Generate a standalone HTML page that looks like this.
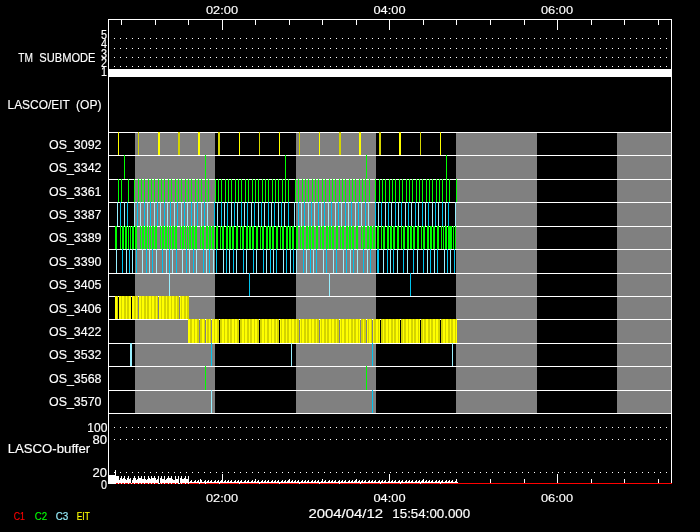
<!DOCTYPE html>
<html><head><meta charset="utf-8"><title>LASCO/EIT plan</title>
<style>
html,body{margin:0;padding:0;background:#000;}
svg{display:block;}
text{font-family:"Liberation Sans",sans-serif;stroke-width:0.15px;}
</style></head>
<body>
<svg width="700" height="532" viewBox="0 0 700 532">
<defs><filter id="g" x="0" y="0" width="100%" height="100%" filterUnits="userSpaceOnUse" color-interpolation-filters="sRGB"><feOffset dx="0" dy="0"/></filter></defs>
<rect width="700" height="532" fill="#000"/>
<g shape-rendering="crispEdges">
<rect x="135" y="132" width="80" height="281" fill="#808080"/>
<rect x="296" y="132" width="80" height="281" fill="#808080"/>
<rect x="456" y="132" width="81" height="281" fill="#808080"/>
<rect x="617" y="132" width="54" height="281" fill="#808080"/>
<rect x="108" y="132" width="564" height="1" fill="#fff"/>
<rect x="108" y="155" width="564" height="1" fill="#fff"/>
<rect x="108" y="179" width="564" height="1" fill="#fff"/>
<rect x="108" y="202" width="564" height="1" fill="#fff"/>
<rect x="108" y="226" width="564" height="1" fill="#fff"/>
<rect x="108" y="249" width="564" height="1" fill="#fff"/>
<rect x="108" y="273" width="564" height="1" fill="#fff"/>
<rect x="108" y="296" width="564" height="1" fill="#fff"/>
<rect x="108" y="319" width="564" height="1" fill="#fff"/>
<rect x="108" y="343" width="564" height="1" fill="#fff"/>
<rect x="108" y="366" width="564" height="1" fill="#fff"/>
<rect x="108" y="390" width="564" height="1" fill="#fff"/>
<rect x="108" y="413" width="564" height="1" fill="#fff"/>
<rect x="118" y="132" width="1" height="23" fill="#ffff00"/>
<rect x="138" y="132" width="1" height="23" fill="#d4d400"/>
<rect x="158" y="132" width="2" height="23" fill="#ffff00"/>
<rect x="178" y="132" width="2" height="23" fill="#d4d400"/>
<rect x="198" y="132" width="2" height="23" fill="#ffff00"/>
<rect x="218" y="132" width="2" height="23" fill="#d4d400"/>
<rect x="239" y="132" width="1" height="23" fill="#ffff00"/>
<rect x="259" y="132" width="1" height="23" fill="#d4d400"/>
<rect x="279" y="132" width="1" height="23" fill="#ffff00"/>
<rect x="299" y="132" width="1" height="23" fill="#d4d400"/>
<rect x="319" y="132" width="1" height="23" fill="#ffff00"/>
<rect x="339" y="132" width="2" height="23" fill="#d4d400"/>
<rect x="359" y="132" width="2" height="23" fill="#ffff00"/>
<rect x="379" y="132" width="2" height="23" fill="#d4d400"/>
<rect x="399" y="132" width="2" height="23" fill="#ffff00"/>
<rect x="420" y="132" width="1" height="23" fill="#d4d400"/>
<rect x="440" y="132" width="1" height="23" fill="#ffff00"/>
<rect x="124" y="155" width="1" height="24" fill="#00ff00"/>
<rect x="205" y="155" width="1" height="24" fill="#00ff00"/>
<rect x="285" y="155" width="1" height="24" fill="#00ff00"/>
<rect x="366" y="155" width="1" height="24" fill="#00ff00"/>
<rect x="446" y="155" width="1" height="24" fill="#00ff00"/>
<rect x="118" y="179" width="1" height="23" fill="#00ff00"/>
<rect x="121" y="179" width="1" height="23" fill="#00ff00"/>
<rect x="128" y="179" width="1" height="23" fill="#00ff00"/>
<rect x="134" y="179" width="1" height="23" fill="#00ff00"/>
<rect x="138" y="179" width="1" height="23" fill="#00ff00"/>
<rect x="141" y="179" width="1" height="23" fill="#00ff00"/>
<rect x="144" y="179" width="1" height="23" fill="#00ff00"/>
<rect x="148" y="179" width="1" height="23" fill="#00ff00"/>
<rect x="151" y="179" width="1" height="23" fill="#00ff00"/>
<rect x="154" y="179" width="1" height="23" fill="#00ff00"/>
<rect x="158" y="179" width="1" height="23" fill="#00ff00"/>
<rect x="161" y="179" width="1" height="23" fill="#00ff00"/>
<rect x="164" y="179" width="1" height="23" fill="#00ff00"/>
<rect x="168" y="179" width="1" height="23" fill="#00ff00"/>
<rect x="171" y="179" width="1" height="23" fill="#00ff00"/>
<rect x="175" y="179" width="1" height="23" fill="#00ff00"/>
<rect x="178" y="179" width="1" height="23" fill="#00ff00"/>
<rect x="181" y="179" width="1" height="23" fill="#00ff00"/>
<rect x="185" y="179" width="1" height="23" fill="#00ff00"/>
<rect x="188" y="179" width="1" height="23" fill="#00ff00"/>
<rect x="191" y="179" width="1" height="23" fill="#00ff00"/>
<rect x="195" y="179" width="1" height="23" fill="#00ff00"/>
<rect x="198" y="179" width="1" height="23" fill="#00ff00"/>
<rect x="201" y="179" width="1" height="23" fill="#00ff00"/>
<rect x="205" y="179" width="1" height="23" fill="#00ff00"/>
<rect x="208" y="179" width="1" height="23" fill="#00ff00"/>
<rect x="215" y="179" width="1" height="23" fill="#00ff00"/>
<rect x="218" y="179" width="1" height="23" fill="#00ff00"/>
<rect x="221" y="179" width="1" height="23" fill="#00ff00"/>
<rect x="225" y="179" width="1" height="23" fill="#00ff00"/>
<rect x="228" y="179" width="1" height="23" fill="#00ff00"/>
<rect x="231" y="179" width="1" height="23" fill="#00ff00"/>
<rect x="235" y="179" width="1" height="23" fill="#00ff00"/>
<rect x="238" y="179" width="1" height="23" fill="#00ff00"/>
<rect x="241" y="179" width="1" height="23" fill="#00ff00"/>
<rect x="245" y="179" width="1" height="23" fill="#00ff00"/>
<rect x="248" y="179" width="1" height="23" fill="#00ff00"/>
<rect x="252" y="179" width="1" height="23" fill="#00ff00"/>
<rect x="255" y="179" width="1" height="23" fill="#00ff00"/>
<rect x="258" y="179" width="1" height="23" fill="#00ff00"/>
<rect x="262" y="179" width="1" height="23" fill="#00ff00"/>
<rect x="265" y="179" width="1" height="23" fill="#00ff00"/>
<rect x="268" y="179" width="1" height="23" fill="#00ff00"/>
<rect x="272" y="179" width="1" height="23" fill="#00ff00"/>
<rect x="275" y="179" width="1" height="23" fill="#00ff00"/>
<rect x="278" y="179" width="1" height="23" fill="#00ff00"/>
<rect x="282" y="179" width="1" height="23" fill="#00ff00"/>
<rect x="285" y="179" width="1" height="23" fill="#00ff00"/>
<rect x="288" y="179" width="1" height="23" fill="#00ff00"/>
<rect x="295" y="179" width="1" height="23" fill="#00ff00"/>
<rect x="298" y="179" width="1" height="23" fill="#00ff00"/>
<rect x="302" y="179" width="1" height="23" fill="#00ff00"/>
<rect x="305" y="179" width="1" height="23" fill="#00ff00"/>
<rect x="308" y="179" width="1" height="23" fill="#00ff00"/>
<rect x="312" y="179" width="1" height="23" fill="#00ff00"/>
<rect x="315" y="179" width="1" height="23" fill="#00ff00"/>
<rect x="318" y="179" width="1" height="23" fill="#00ff00"/>
<rect x="322" y="179" width="1" height="23" fill="#00ff00"/>
<rect x="325" y="179" width="1" height="23" fill="#00ff00"/>
<rect x="329" y="179" width="1" height="23" fill="#00ff00"/>
<rect x="332" y="179" width="1" height="23" fill="#00ff00"/>
<rect x="335" y="179" width="1" height="23" fill="#00ff00"/>
<rect x="339" y="179" width="1" height="23" fill="#00ff00"/>
<rect x="342" y="179" width="1" height="23" fill="#00ff00"/>
<rect x="345" y="179" width="1" height="23" fill="#00ff00"/>
<rect x="349" y="179" width="1" height="23" fill="#00ff00"/>
<rect x="352" y="179" width="1" height="23" fill="#00ff00"/>
<rect x="355" y="179" width="1" height="23" fill="#00ff00"/>
<rect x="359" y="179" width="1" height="23" fill="#00ff00"/>
<rect x="362" y="179" width="1" height="23" fill="#00ff00"/>
<rect x="365" y="179" width="1" height="23" fill="#00ff00"/>
<rect x="369" y="179" width="1" height="23" fill="#00ff00"/>
<rect x="375" y="179" width="1" height="23" fill="#00ff00"/>
<rect x="379" y="179" width="1" height="23" fill="#00ff00"/>
<rect x="382" y="179" width="1" height="23" fill="#00ff00"/>
<rect x="385" y="179" width="1" height="23" fill="#00ff00"/>
<rect x="389" y="179" width="1" height="23" fill="#00ff00"/>
<rect x="392" y="179" width="1" height="23" fill="#00ff00"/>
<rect x="395" y="179" width="1" height="23" fill="#00ff00"/>
<rect x="399" y="179" width="1" height="23" fill="#00ff00"/>
<rect x="402" y="179" width="1" height="23" fill="#00ff00"/>
<rect x="406" y="179" width="1" height="23" fill="#00ff00"/>
<rect x="409" y="179" width="1" height="23" fill="#00ff00"/>
<rect x="412" y="179" width="1" height="23" fill="#00ff00"/>
<rect x="416" y="179" width="1" height="23" fill="#00ff00"/>
<rect x="419" y="179" width="1" height="23" fill="#00ff00"/>
<rect x="422" y="179" width="1" height="23" fill="#00ff00"/>
<rect x="426" y="179" width="1" height="23" fill="#00ff00"/>
<rect x="429" y="179" width="1" height="23" fill="#00ff00"/>
<rect x="432" y="179" width="1" height="23" fill="#00ff00"/>
<rect x="436" y="179" width="1" height="23" fill="#00ff00"/>
<rect x="439" y="179" width="1" height="23" fill="#00ff00"/>
<rect x="442" y="179" width="1" height="23" fill="#00ff00"/>
<rect x="446" y="179" width="1" height="23" fill="#00ff00"/>
<rect x="449" y="179" width="1" height="23" fill="#00ff00"/>
<rect x="456" y="179" width="1" height="23" fill="#00ff00"/>
<rect x="117" y="202" width="1" height="24" fill="#98f0ff"/>
<rect x="120" y="202" width="1" height="24" fill="#00c4ee"/>
<rect x="124" y="202" width="1" height="24" fill="#98f0ff"/>
<rect x="127" y="202" width="1" height="24" fill="#00c4ee"/>
<rect x="134" y="202" width="1" height="24" fill="#98f0ff"/>
<rect x="137" y="202" width="1" height="24" fill="#00c4ee"/>
<rect x="140" y="202" width="1" height="24" fill="#98f0ff"/>
<rect x="144" y="202" width="1" height="24" fill="#00c4ee"/>
<rect x="147" y="202" width="1" height="24" fill="#98f0ff"/>
<rect x="150" y="202" width="1" height="24" fill="#00c4ee"/>
<rect x="154" y="202" width="1" height="24" fill="#98f0ff"/>
<rect x="157" y="202" width="1" height="24" fill="#00c4ee"/>
<rect x="160" y="202" width="1" height="24" fill="#98f0ff"/>
<rect x="164" y="202" width="1" height="24" fill="#00c4ee"/>
<rect x="167" y="202" width="1" height="24" fill="#98f0ff"/>
<rect x="170" y="202" width="1" height="24" fill="#00c4ee"/>
<rect x="174" y="202" width="1" height="24" fill="#98f0ff"/>
<rect x="177" y="202" width="1" height="24" fill="#00c4ee"/>
<rect x="181" y="202" width="1" height="24" fill="#98f0ff"/>
<rect x="184" y="202" width="1" height="24" fill="#00c4ee"/>
<rect x="187" y="202" width="1" height="24" fill="#98f0ff"/>
<rect x="191" y="202" width="1" height="24" fill="#00c4ee"/>
<rect x="194" y="202" width="1" height="24" fill="#98f0ff"/>
<rect x="197" y="202" width="1" height="24" fill="#00c4ee"/>
<rect x="201" y="202" width="1" height="24" fill="#98f0ff"/>
<rect x="204" y="202" width="1" height="24" fill="#00c4ee"/>
<rect x="207" y="202" width="1" height="24" fill="#98f0ff"/>
<rect x="214" y="202" width="1" height="24" fill="#00c4ee"/>
<rect x="217" y="202" width="1" height="24" fill="#98f0ff"/>
<rect x="221" y="202" width="1" height="24" fill="#00c4ee"/>
<rect x="224" y="202" width="1" height="24" fill="#98f0ff"/>
<rect x="227" y="202" width="1" height="24" fill="#00c4ee"/>
<rect x="231" y="202" width="1" height="24" fill="#98f0ff"/>
<rect x="234" y="202" width="1" height="24" fill="#00c4ee"/>
<rect x="237" y="202" width="1" height="24" fill="#98f0ff"/>
<rect x="241" y="202" width="1" height="24" fill="#00c4ee"/>
<rect x="244" y="202" width="1" height="24" fill="#98f0ff"/>
<rect x="247" y="202" width="1" height="24" fill="#00c4ee"/>
<rect x="251" y="202" width="1" height="24" fill="#98f0ff"/>
<rect x="254" y="202" width="1" height="24" fill="#00c4ee"/>
<rect x="258" y="202" width="1" height="24" fill="#98f0ff"/>
<rect x="261" y="202" width="1" height="24" fill="#00c4ee"/>
<rect x="264" y="202" width="1" height="24" fill="#98f0ff"/>
<rect x="268" y="202" width="1" height="24" fill="#00c4ee"/>
<rect x="271" y="202" width="1" height="24" fill="#98f0ff"/>
<rect x="274" y="202" width="1" height="24" fill="#00c4ee"/>
<rect x="278" y="202" width="1" height="24" fill="#98f0ff"/>
<rect x="281" y="202" width="1" height="24" fill="#00c4ee"/>
<rect x="284" y="202" width="1" height="24" fill="#98f0ff"/>
<rect x="288" y="202" width="1" height="24" fill="#00c4ee"/>
<rect x="294" y="202" width="1" height="24" fill="#98f0ff"/>
<rect x="298" y="202" width="1" height="24" fill="#00c4ee"/>
<rect x="301" y="202" width="1" height="24" fill="#98f0ff"/>
<rect x="304" y="202" width="1" height="24" fill="#00c4ee"/>
<rect x="308" y="202" width="1" height="24" fill="#98f0ff"/>
<rect x="311" y="202" width="1" height="24" fill="#00c4ee"/>
<rect x="314" y="202" width="1" height="24" fill="#98f0ff"/>
<rect x="318" y="202" width="1" height="24" fill="#00c4ee"/>
<rect x="321" y="202" width="1" height="24" fill="#98f0ff"/>
<rect x="324" y="202" width="1" height="24" fill="#00c4ee"/>
<rect x="328" y="202" width="1" height="24" fill="#98f0ff"/>
<rect x="331" y="202" width="1" height="24" fill="#00c4ee"/>
<rect x="335" y="202" width="1" height="24" fill="#98f0ff"/>
<rect x="338" y="202" width="1" height="24" fill="#00c4ee"/>
<rect x="341" y="202" width="1" height="24" fill="#98f0ff"/>
<rect x="345" y="202" width="1" height="24" fill="#00c4ee"/>
<rect x="348" y="202" width="1" height="24" fill="#98f0ff"/>
<rect x="351" y="202" width="1" height="24" fill="#00c4ee"/>
<rect x="355" y="202" width="1" height="24" fill="#98f0ff"/>
<rect x="358" y="202" width="1" height="24" fill="#00c4ee"/>
<rect x="361" y="202" width="1" height="24" fill="#98f0ff"/>
<rect x="365" y="202" width="1" height="24" fill="#00c4ee"/>
<rect x="368" y="202" width="1" height="24" fill="#98f0ff"/>
<rect x="375" y="202" width="1" height="24" fill="#00c4ee"/>
<rect x="378" y="202" width="1" height="24" fill="#98f0ff"/>
<rect x="381" y="202" width="1" height="24" fill="#00c4ee"/>
<rect x="385" y="202" width="1" height="24" fill="#98f0ff"/>
<rect x="388" y="202" width="1" height="24" fill="#00c4ee"/>
<rect x="391" y="202" width="1" height="24" fill="#98f0ff"/>
<rect x="395" y="202" width="1" height="24" fill="#00c4ee"/>
<rect x="398" y="202" width="1" height="24" fill="#98f0ff"/>
<rect x="401" y="202" width="1" height="24" fill="#00c4ee"/>
<rect x="405" y="202" width="1" height="24" fill="#98f0ff"/>
<rect x="408" y="202" width="1" height="24" fill="#00c4ee"/>
<rect x="411" y="202" width="1" height="24" fill="#98f0ff"/>
<rect x="415" y="202" width="1" height="24" fill="#00c4ee"/>
<rect x="418" y="202" width="1" height="24" fill="#98f0ff"/>
<rect x="422" y="202" width="1" height="24" fill="#00c4ee"/>
<rect x="425" y="202" width="1" height="24" fill="#98f0ff"/>
<rect x="428" y="202" width="1" height="24" fill="#00c4ee"/>
<rect x="432" y="202" width="1" height="24" fill="#98f0ff"/>
<rect x="435" y="202" width="1" height="24" fill="#00c4ee"/>
<rect x="438" y="202" width="1" height="24" fill="#98f0ff"/>
<rect x="442" y="202" width="1" height="24" fill="#00c4ee"/>
<rect x="445" y="202" width="1" height="24" fill="#98f0ff"/>
<rect x="448" y="202" width="1" height="24" fill="#00c4ee"/>
<rect x="455" y="202" width="1" height="24" fill="#98f0ff"/>
<rect x="115" y="226" width="2" height="23" fill="#00ff00"/>
<rect x="120" y="226" width="1" height="23" fill="#00ff00"/>
<rect x="122" y="226" width="2" height="23" fill="#00ff00"/>
<rect x="125" y="226" width="2" height="23" fill="#00ff00"/>
<rect x="128" y="226" width="1" height="23" fill="#00ff00"/>
<rect x="130" y="226" width="1" height="23" fill="#00ff00"/>
<rect x="132" y="226" width="2" height="23" fill="#00ff00"/>
<rect x="135" y="226" width="2" height="23" fill="#00ff00"/>
<rect x="140" y="226" width="1" height="23" fill="#00ff00"/>
<rect x="142" y="226" width="2" height="23" fill="#00ff00"/>
<rect x="145" y="226" width="2" height="23" fill="#00ff00"/>
<rect x="148" y="226" width="1" height="23" fill="#00ff00"/>
<rect x="150" y="226" width="1" height="23" fill="#00ff00"/>
<rect x="152" y="226" width="2" height="23" fill="#00ff00"/>
<rect x="155" y="226" width="2" height="23" fill="#00ff00"/>
<rect x="160" y="226" width="1" height="23" fill="#00ff00"/>
<rect x="162" y="226" width="2" height="23" fill="#00ff00"/>
<rect x="165" y="226" width="2" height="23" fill="#00ff00"/>
<rect x="168" y="226" width="1" height="23" fill="#00ff00"/>
<rect x="170" y="226" width="1" height="23" fill="#00ff00"/>
<rect x="172" y="226" width="2" height="23" fill="#00ff00"/>
<rect x="175" y="226" width="2" height="23" fill="#00ff00"/>
<rect x="180" y="226" width="1" height="23" fill="#00ff00"/>
<rect x="182" y="226" width="2" height="23" fill="#00ff00"/>
<rect x="185" y="226" width="1" height="23" fill="#00ff00"/>
<rect x="187" y="226" width="1" height="23" fill="#00ff00"/>
<rect x="189" y="226" width="2" height="23" fill="#00ff00"/>
<rect x="192" y="226" width="2" height="23" fill="#00ff00"/>
<rect x="195" y="226" width="2" height="23" fill="#00ff00"/>
<rect x="200" y="226" width="1" height="23" fill="#00ff00"/>
<rect x="202" y="226" width="2" height="23" fill="#00ff00"/>
<rect x="206" y="226" width="2" height="23" fill="#00ff00"/>
<rect x="209" y="226" width="2" height="23" fill="#00ff00"/>
<rect x="212" y="226" width="2" height="23" fill="#00ff00"/>
<rect x="216" y="226" width="2" height="23" fill="#00ff00"/>
<rect x="220" y="226" width="1" height="23" fill="#00ff00"/>
<rect x="222" y="226" width="2" height="23" fill="#00ff00"/>
<rect x="226" y="226" width="2" height="23" fill="#00ff00"/>
<rect x="229" y="226" width="2" height="23" fill="#00ff00"/>
<rect x="232" y="226" width="2" height="23" fill="#00ff00"/>
<rect x="236" y="226" width="2" height="23" fill="#00ff00"/>
<rect x="240" y="226" width="1" height="23" fill="#00ff00"/>
<rect x="242" y="226" width="2" height="23" fill="#00ff00"/>
<rect x="246" y="226" width="2" height="23" fill="#00ff00"/>
<rect x="249" y="226" width="2" height="23" fill="#00ff00"/>
<rect x="252" y="226" width="2" height="23" fill="#00ff00"/>
<rect x="256" y="226" width="2" height="23" fill="#00ff00"/>
<rect x="260" y="226" width="1" height="23" fill="#00ff00"/>
<rect x="262" y="226" width="2" height="23" fill="#00ff00"/>
<rect x="266" y="226" width="2" height="23" fill="#00ff00"/>
<rect x="269" y="226" width="2" height="23" fill="#00ff00"/>
<rect x="272" y="226" width="2" height="23" fill="#00ff00"/>
<rect x="276" y="226" width="2" height="23" fill="#00ff00"/>
<rect x="280" y="226" width="1" height="23" fill="#00ff00"/>
<rect x="282" y="226" width="2" height="23" fill="#00ff00"/>
<rect x="286" y="226" width="2" height="23" fill="#00ff00"/>
<rect x="289" y="226" width="2" height="23" fill="#00ff00"/>
<rect x="292" y="226" width="2" height="23" fill="#00ff00"/>
<rect x="296" y="226" width="2" height="23" fill="#00ff00"/>
<rect x="300" y="226" width="1" height="23" fill="#00ff00"/>
<rect x="302" y="226" width="2" height="23" fill="#00ff00"/>
<rect x="306" y="226" width="2" height="23" fill="#00ff00"/>
<rect x="309" y="226" width="2" height="23" fill="#00ff00"/>
<rect x="312" y="226" width="2" height="23" fill="#00ff00"/>
<rect x="316" y="226" width="2" height="23" fill="#00ff00"/>
<rect x="320" y="226" width="1" height="23" fill="#00ff00"/>
<rect x="322" y="226" width="2" height="23" fill="#00ff00"/>
<rect x="326" y="226" width="2" height="23" fill="#00ff00"/>
<rect x="329" y="226" width="2" height="23" fill="#00ff00"/>
<rect x="332" y="226" width="2" height="23" fill="#00ff00"/>
<rect x="336" y="226" width="2" height="23" fill="#00ff00"/>
<rect x="340" y="226" width="1" height="23" fill="#00ff00"/>
<rect x="342" y="226" width="2" height="23" fill="#00ff00"/>
<rect x="346" y="226" width="2" height="23" fill="#00ff00"/>
<rect x="349" y="226" width="2" height="23" fill="#00ff00"/>
<rect x="352" y="226" width="2" height="23" fill="#00ff00"/>
<rect x="356" y="226" width="2" height="23" fill="#00ff00"/>
<rect x="361" y="226" width="1" height="23" fill="#00ff00"/>
<rect x="363" y="226" width="2" height="23" fill="#00ff00"/>
<rect x="367" y="226" width="2" height="23" fill="#00ff00"/>
<rect x="370" y="226" width="2" height="23" fill="#00ff00"/>
<rect x="373" y="226" width="2" height="23" fill="#00ff00"/>
<rect x="377" y="226" width="2" height="23" fill="#00ff00"/>
<rect x="381" y="226" width="1" height="23" fill="#00ff00"/>
<rect x="383" y="226" width="2" height="23" fill="#00ff00"/>
<rect x="387" y="226" width="2" height="23" fill="#00ff00"/>
<rect x="390" y="226" width="2" height="23" fill="#00ff00"/>
<rect x="393" y="226" width="2" height="23" fill="#00ff00"/>
<rect x="397" y="226" width="2" height="23" fill="#00ff00"/>
<rect x="401" y="226" width="1" height="23" fill="#00ff00"/>
<rect x="403" y="226" width="2" height="23" fill="#00ff00"/>
<rect x="407" y="226" width="2" height="23" fill="#00ff00"/>
<rect x="410" y="226" width="2" height="23" fill="#00ff00"/>
<rect x="413" y="226" width="2" height="23" fill="#00ff00"/>
<rect x="417" y="226" width="2" height="23" fill="#00ff00"/>
<rect x="421" y="226" width="1" height="23" fill="#00ff00"/>
<rect x="423" y="226" width="2" height="23" fill="#00ff00"/>
<rect x="427" y="226" width="2" height="23" fill="#00ff00"/>
<rect x="430" y="226" width="2" height="23" fill="#00ff00"/>
<rect x="433" y="226" width="2" height="23" fill="#00ff00"/>
<rect x="437" y="226" width="2" height="23" fill="#00ff00"/>
<rect x="441" y="226" width="1" height="23" fill="#00ff00"/>
<rect x="443" y="226" width="1" height="23" fill="#00ff00"/>
<rect x="445" y="226" width="2" height="23" fill="#00ff00"/>
<rect x="448" y="226" width="2" height="23" fill="#00ff00"/>
<rect x="450" y="226" width="2" height="23" fill="#00ff00"/>
<rect x="453" y="226" width="1" height="23" fill="#00ff00"/>
<rect x="455" y="226" width="1" height="23" fill="#00ff00"/>
<rect x="116" y="249" width="1" height="24" fill="#98f0ff"/>
<rect x="122" y="249" width="1" height="24" fill="#00c4ee"/>
<rect x="126" y="249" width="1" height="24" fill="#98f0ff"/>
<rect x="129" y="249" width="1" height="24" fill="#00c4ee"/>
<rect x="132" y="249" width="1" height="24" fill="#98f0ff"/>
<rect x="136" y="249" width="1" height="24" fill="#00c4ee"/>
<rect x="142" y="249" width="1" height="24" fill="#98f0ff"/>
<rect x="146" y="249" width="1" height="24" fill="#00c4ee"/>
<rect x="149" y="249" width="1" height="24" fill="#98f0ff"/>
<rect x="152" y="249" width="1" height="24" fill="#00c4ee"/>
<rect x="156" y="249" width="1" height="24" fill="#98f0ff"/>
<rect x="162" y="249" width="1" height="24" fill="#00c4ee"/>
<rect x="166" y="249" width="1" height="24" fill="#98f0ff"/>
<rect x="169" y="249" width="1" height="24" fill="#00c4ee"/>
<rect x="172" y="249" width="1" height="24" fill="#98f0ff"/>
<rect x="176" y="249" width="1" height="24" fill="#00c4ee"/>
<rect x="182" y="249" width="1" height="24" fill="#98f0ff"/>
<rect x="186" y="249" width="1" height="24" fill="#00c4ee"/>
<rect x="189" y="249" width="1" height="24" fill="#98f0ff"/>
<rect x="193" y="249" width="1" height="24" fill="#00c4ee"/>
<rect x="196" y="249" width="1" height="24" fill="#98f0ff"/>
<rect x="203" y="249" width="1" height="24" fill="#00c4ee"/>
<rect x="206" y="249" width="1" height="24" fill="#98f0ff"/>
<rect x="209" y="249" width="1" height="24" fill="#00c4ee"/>
<rect x="213" y="249" width="1" height="24" fill="#98f0ff"/>
<rect x="216" y="249" width="1" height="24" fill="#00c4ee"/>
<rect x="223" y="249" width="1" height="24" fill="#98f0ff"/>
<rect x="226" y="249" width="1" height="24" fill="#00c4ee"/>
<rect x="229" y="249" width="1" height="24" fill="#98f0ff"/>
<rect x="233" y="249" width="1" height="24" fill="#00c4ee"/>
<rect x="236" y="249" width="1" height="24" fill="#98f0ff"/>
<rect x="243" y="249" width="1" height="24" fill="#00c4ee"/>
<rect x="246" y="249" width="1" height="24" fill="#98f0ff"/>
<rect x="253" y="249" width="1" height="24" fill="#00c4ee"/>
<rect x="256" y="249" width="1" height="24" fill="#98f0ff"/>
<rect x="263" y="249" width="1" height="24" fill="#00c4ee"/>
<rect x="266" y="249" width="1" height="24" fill="#98f0ff"/>
<rect x="270" y="249" width="1" height="24" fill="#00c4ee"/>
<rect x="273" y="249" width="1" height="24" fill="#98f0ff"/>
<rect x="276" y="249" width="1" height="24" fill="#00c4ee"/>
<rect x="283" y="249" width="1" height="24" fill="#98f0ff"/>
<rect x="286" y="249" width="1" height="24" fill="#00c4ee"/>
<rect x="290" y="249" width="1" height="24" fill="#98f0ff"/>
<rect x="293" y="249" width="1" height="24" fill="#00c4ee"/>
<rect x="296" y="249" width="1" height="24" fill="#98f0ff"/>
<rect x="303" y="249" width="1" height="24" fill="#00c4ee"/>
<rect x="306" y="249" width="1" height="24" fill="#98f0ff"/>
<rect x="310" y="249" width="1" height="24" fill="#00c4ee"/>
<rect x="313" y="249" width="1" height="24" fill="#98f0ff"/>
<rect x="316" y="249" width="1" height="24" fill="#00c4ee"/>
<rect x="323" y="249" width="1" height="24" fill="#98f0ff"/>
<rect x="326" y="249" width="1" height="24" fill="#00c4ee"/>
<rect x="333" y="249" width="1" height="24" fill="#98f0ff"/>
<rect x="336" y="249" width="1" height="24" fill="#00c4ee"/>
<rect x="343" y="249" width="1" height="24" fill="#98f0ff"/>
<rect x="346" y="249" width="1" height="24" fill="#00c4ee"/>
<rect x="350" y="249" width="1" height="24" fill="#98f0ff"/>
<rect x="353" y="249" width="1" height="24" fill="#00c4ee"/>
<rect x="357" y="249" width="1" height="24" fill="#98f0ff"/>
<rect x="363" y="249" width="1" height="24" fill="#00c4ee"/>
<rect x="367" y="249" width="1" height="24" fill="#98f0ff"/>
<rect x="370" y="249" width="1" height="24" fill="#00c4ee"/>
<rect x="377" y="249" width="2" height="24" fill="#00c4ee"/>
<rect x="383" y="249" width="1" height="24" fill="#98f0ff"/>
<rect x="387" y="249" width="1" height="24" fill="#00c4ee"/>
<rect x="390" y="249" width="1" height="24" fill="#98f0ff"/>
<rect x="393" y="249" width="1" height="24" fill="#00c4ee"/>
<rect x="397" y="249" width="1" height="24" fill="#98f0ff"/>
<rect x="403" y="249" width="1" height="24" fill="#00c4ee"/>
<rect x="407" y="249" width="1" height="24" fill="#98f0ff"/>
<rect x="413" y="249" width="1" height="24" fill="#00c4ee"/>
<rect x="417" y="249" width="1" height="24" fill="#98f0ff"/>
<rect x="423" y="249" width="1" height="24" fill="#00c4ee"/>
<rect x="427" y="249" width="1" height="24" fill="#98f0ff"/>
<rect x="430" y="249" width="1" height="24" fill="#00c4ee"/>
<rect x="434" y="249" width="1" height="24" fill="#98f0ff"/>
<rect x="437" y="249" width="1" height="24" fill="#00c4ee"/>
<rect x="444" y="249" width="1" height="24" fill="#98f0ff"/>
<rect x="447" y="249" width="1" height="24" fill="#00c4ee"/>
<rect x="450" y="249" width="1" height="24" fill="#98f0ff"/>
<rect x="454" y="249" width="1" height="24" fill="#00c4ee"/>
<rect x="169" y="273" width="1" height="23" fill="#98f0ff"/>
<rect x="249" y="273" width="1" height="23" fill="#00c4ee"/>
<rect x="329" y="273" width="1" height="23" fill="#98f0ff"/>
<rect x="410" y="273" width="1" height="23" fill="#00c4ee"/>
<rect x="115" y="296" width="1" height="23" fill="#ffff00"/>
<rect x="116" y="296" width="1" height="23" fill="#ffff00"/>
<rect x="117" y="296" width="1" height="23" fill="#d4d400"/>
<rect x="119" y="296" width="1" height="23" fill="#ffff00"/>
<rect x="120" y="296" width="1" height="23" fill="#ffff00"/>
<rect x="121" y="296" width="1" height="23" fill="#d4d400"/>
<rect x="122" y="296" width="1" height="23" fill="#ffff00"/>
<rect x="123" y="296" width="1" height="23" fill="#ffff00"/>
<rect x="124" y="296" width="1" height="23" fill="#d4d400"/>
<rect x="125" y="296" width="1" height="23" fill="#d4d400"/>
<rect x="126" y="296" width="1" height="23" fill="#ffff00"/>
<rect x="127" y="296" width="1" height="23" fill="#d4d400"/>
<rect x="128" y="296" width="1" height="23" fill="#d4d400"/>
<rect x="129" y="296" width="1" height="23" fill="#ffff00"/>
<rect x="130" y="296" width="1" height="23" fill="#ffff00"/>
<rect x="132" y="296" width="1" height="23" fill="#ffff00"/>
<rect x="133" y="296" width="1" height="23" fill="#ffff00"/>
<rect x="134" y="296" width="1" height="23" fill="#d4d400"/>
<rect x="135" y="296" width="1" height="23" fill="#d4d400"/>
<rect x="136" y="296" width="1" height="23" fill="#ffff00"/>
<rect x="137" y="296" width="1" height="23" fill="#d4d400"/>
<rect x="139" y="296" width="1" height="23" fill="#ffff00"/>
<rect x="140" y="296" width="1" height="23" fill="#ffff00"/>
<rect x="141" y="296" width="1" height="23" fill="#d4d400"/>
<rect x="142" y="296" width="1" height="23" fill="#ffff00"/>
<rect x="143" y="296" width="1" height="23" fill="#ffff00"/>
<rect x="144" y="296" width="1" height="23" fill="#d4d400"/>
<rect x="145" y="296" width="1" height="23" fill="#d4d400"/>
<rect x="146" y="296" width="1" height="23" fill="#ffff00"/>
<rect x="147" y="296" width="1" height="23" fill="#d4d400"/>
<rect x="148" y="296" width="1" height="23" fill="#d4d400"/>
<rect x="149" y="296" width="1" height="23" fill="#ffff00"/>
<rect x="150" y="296" width="1" height="23" fill="#ffff00"/>
<rect x="151" y="296" width="1" height="23" fill="#d4d400"/>
<rect x="152" y="296" width="1" height="23" fill="#ffff00"/>
<rect x="153" y="296" width="1" height="23" fill="#ffff00"/>
<rect x="154" y="296" width="1" height="23" fill="#d4d400"/>
<rect x="155" y="296" width="1" height="23" fill="#d4d400"/>
<rect x="156" y="296" width="1" height="23" fill="#ffff00"/>
<rect x="157" y="296" width="1" height="23" fill="#d4d400"/>
<rect x="159" y="296" width="1" height="23" fill="#ffff00"/>
<rect x="160" y="296" width="1" height="23" fill="#ffff00"/>
<rect x="161" y="296" width="1" height="23" fill="#d4d400"/>
<rect x="162" y="296" width="1" height="23" fill="#ffff00"/>
<rect x="163" y="296" width="1" height="23" fill="#ffff00"/>
<rect x="164" y="296" width="1" height="23" fill="#d4d400"/>
<rect x="165" y="296" width="1" height="23" fill="#d4d400"/>
<rect x="166" y="296" width="1" height="23" fill="#ffff00"/>
<rect x="167" y="296" width="1" height="23" fill="#d4d400"/>
<rect x="168" y="296" width="1" height="23" fill="#d4d400"/>
<rect x="169" y="296" width="1" height="23" fill="#ffff00"/>
<rect x="170" y="296" width="1" height="23" fill="#ffff00"/>
<rect x="171" y="296" width="1" height="23" fill="#d4d400"/>
<rect x="172" y="296" width="1" height="23" fill="#ffff00"/>
<rect x="173" y="296" width="1" height="23" fill="#ffff00"/>
<rect x="174" y="296" width="1" height="23" fill="#d4d400"/>
<rect x="175" y="296" width="1" height="23" fill="#d4d400"/>
<rect x="176" y="296" width="1" height="23" fill="#ffff00"/>
<rect x="177" y="296" width="1" height="23" fill="#d4d400"/>
<rect x="178" y="296" width="1" height="23" fill="#d4d400"/>
<rect x="180" y="296" width="1" height="23" fill="#ffff00"/>
<rect x="181" y="296" width="1" height="23" fill="#d4d400"/>
<rect x="182" y="296" width="1" height="23" fill="#ffff00"/>
<rect x="183" y="296" width="1" height="23" fill="#ffff00"/>
<rect x="184" y="296" width="1" height="23" fill="#d4d400"/>
<rect x="185" y="296" width="1" height="23" fill="#d4d400"/>
<rect x="186" y="296" width="1" height="23" fill="#ffff00"/>
<rect x="187" y="296" width="1" height="23" fill="#d4d400"/>
<rect x="188" y="296" width="1" height="23" fill="#d4d400"/>
<rect x="188" y="319" width="1" height="24" fill="#ffff00"/>
<rect x="189" y="319" width="1" height="24" fill="#ffff00"/>
<rect x="190" y="319" width="1" height="24" fill="#d4d400"/>
<rect x="191" y="319" width="1" height="24" fill="#d4d400"/>
<rect x="192" y="319" width="1" height="24" fill="#ffff00"/>
<rect x="193" y="319" width="1" height="24" fill="#ffff00"/>
<rect x="194" y="319" width="1" height="24" fill="#d4d400"/>
<rect x="195" y="319" width="1" height="24" fill="#ffff00"/>
<rect x="196" y="319" width="1" height="24" fill="#ffff00"/>
<rect x="197" y="319" width="1" height="24" fill="#d4d400"/>
<rect x="198" y="319" width="1" height="24" fill="#d4d400"/>
<rect x="200" y="319" width="1" height="24" fill="#d4d400"/>
<rect x="201" y="319" width="1" height="24" fill="#d4d400"/>
<rect x="202" y="319" width="1" height="24" fill="#ffff00"/>
<rect x="203" y="319" width="1" height="24" fill="#ffff00"/>
<rect x="204" y="319" width="1" height="24" fill="#d4d400"/>
<rect x="206" y="319" width="1" height="24" fill="#ffff00"/>
<rect x="207" y="319" width="1" height="24" fill="#d4d400"/>
<rect x="208" y="319" width="1" height="24" fill="#d4d400"/>
<rect x="209" y="319" width="1" height="24" fill="#ffff00"/>
<rect x="210" y="319" width="1" height="24" fill="#d4d400"/>
<rect x="212" y="319" width="1" height="24" fill="#ffff00"/>
<rect x="213" y="319" width="1" height="24" fill="#ffff00"/>
<rect x="214" y="319" width="1" height="24" fill="#d4d400"/>
<rect x="215" y="319" width="1" height="24" fill="#ffff00"/>
<rect x="216" y="319" width="1" height="24" fill="#ffff00"/>
<rect x="217" y="319" width="1" height="24" fill="#d4d400"/>
<rect x="218" y="319" width="1" height="24" fill="#d4d400"/>
<rect x="220" y="319" width="1" height="24" fill="#d4d400"/>
<rect x="221" y="319" width="1" height="24" fill="#d4d400"/>
<rect x="222" y="319" width="1" height="24" fill="#ffff00"/>
<rect x="223" y="319" width="1" height="24" fill="#ffff00"/>
<rect x="224" y="319" width="1" height="24" fill="#d4d400"/>
<rect x="225" y="319" width="1" height="24" fill="#ffff00"/>
<rect x="226" y="319" width="1" height="24" fill="#ffff00"/>
<rect x="227" y="319" width="1" height="24" fill="#d4d400"/>
<rect x="228" y="319" width="1" height="24" fill="#d4d400"/>
<rect x="229" y="319" width="1" height="24" fill="#ffff00"/>
<rect x="230" y="319" width="1" height="24" fill="#d4d400"/>
<rect x="231" y="319" width="1" height="24" fill="#d4d400"/>
<rect x="232" y="319" width="1" height="24" fill="#ffff00"/>
<rect x="233" y="319" width="1" height="24" fill="#ffff00"/>
<rect x="234" y="319" width="1" height="24" fill="#d4d400"/>
<rect x="235" y="319" width="1" height="24" fill="#ffff00"/>
<rect x="236" y="319" width="1" height="24" fill="#ffff00"/>
<rect x="237" y="319" width="1" height="24" fill="#d4d400"/>
<rect x="238" y="319" width="1" height="24" fill="#d4d400"/>
<rect x="240" y="319" width="1" height="24" fill="#d4d400"/>
<rect x="241" y="319" width="1" height="24" fill="#d4d400"/>
<rect x="242" y="319" width="1" height="24" fill="#ffff00"/>
<rect x="243" y="319" width="1" height="24" fill="#ffff00"/>
<rect x="244" y="319" width="1" height="24" fill="#d4d400"/>
<rect x="245" y="319" width="1" height="24" fill="#ffff00"/>
<rect x="246" y="319" width="1" height="24" fill="#ffff00"/>
<rect x="247" y="319" width="1" height="24" fill="#d4d400"/>
<rect x="248" y="319" width="1" height="24" fill="#d4d400"/>
<rect x="249" y="319" width="1" height="24" fill="#ffff00"/>
<rect x="250" y="319" width="1" height="24" fill="#d4d400"/>
<rect x="251" y="319" width="1" height="24" fill="#d4d400"/>
<rect x="252" y="319" width="1" height="24" fill="#ffff00"/>
<rect x="253" y="319" width="1" height="24" fill="#ffff00"/>
<rect x="254" y="319" width="1" height="24" fill="#d4d400"/>
<rect x="255" y="319" width="1" height="24" fill="#ffff00"/>
<rect x="256" y="319" width="1" height="24" fill="#ffff00"/>
<rect x="257" y="319" width="1" height="24" fill="#d4d400"/>
<rect x="258" y="319" width="1" height="24" fill="#d4d400"/>
<rect x="260" y="319" width="1" height="24" fill="#d4d400"/>
<rect x="261" y="319" width="1" height="24" fill="#d4d400"/>
<rect x="262" y="319" width="1" height="24" fill="#ffff00"/>
<rect x="263" y="319" width="1" height="24" fill="#ffff00"/>
<rect x="264" y="319" width="1" height="24" fill="#d4d400"/>
<rect x="265" y="319" width="1" height="24" fill="#ffff00"/>
<rect x="266" y="319" width="1" height="24" fill="#ffff00"/>
<rect x="267" y="319" width="1" height="24" fill="#d4d400"/>
<rect x="268" y="319" width="1" height="24" fill="#d4d400"/>
<rect x="269" y="319" width="1" height="24" fill="#ffff00"/>
<rect x="270" y="319" width="1" height="24" fill="#ffff00"/>
<rect x="271" y="319" width="1" height="24" fill="#d4d400"/>
<rect x="272" y="319" width="1" height="24" fill="#ffff00"/>
<rect x="273" y="319" width="1" height="24" fill="#ffff00"/>
<rect x="274" y="319" width="1" height="24" fill="#d4d400"/>
<rect x="275" y="319" width="1" height="24" fill="#d4d400"/>
<rect x="276" y="319" width="1" height="24" fill="#ffff00"/>
<rect x="277" y="319" width="1" height="24" fill="#d4d400"/>
<rect x="278" y="319" width="1" height="24" fill="#d4d400"/>
<rect x="280" y="319" width="1" height="24" fill="#ffff00"/>
<rect x="281" y="319" width="1" height="24" fill="#d4d400"/>
<rect x="282" y="319" width="1" height="24" fill="#ffff00"/>
<rect x="283" y="319" width="1" height="24" fill="#ffff00"/>
<rect x="284" y="319" width="1" height="24" fill="#d4d400"/>
<rect x="285" y="319" width="1" height="24" fill="#d4d400"/>
<rect x="286" y="319" width="1" height="24" fill="#ffff00"/>
<rect x="287" y="319" width="1" height="24" fill="#d4d400"/>
<rect x="288" y="319" width="1" height="24" fill="#d4d400"/>
<rect x="289" y="319" width="1" height="24" fill="#ffff00"/>
<rect x="290" y="319" width="1" height="24" fill="#ffff00"/>
<rect x="291" y="319" width="1" height="24" fill="#d4d400"/>
<rect x="292" y="319" width="1" height="24" fill="#ffff00"/>
<rect x="293" y="319" width="1" height="24" fill="#ffff00"/>
<rect x="294" y="319" width="1" height="24" fill="#d4d400"/>
<rect x="295" y="319" width="1" height="24" fill="#d4d400"/>
<rect x="296" y="319" width="1" height="24" fill="#ffff00"/>
<rect x="297" y="319" width="1" height="24" fill="#d4d400"/>
<rect x="298" y="319" width="1" height="24" fill="#d4d400"/>
<rect x="300" y="319" width="1" height="24" fill="#ffff00"/>
<rect x="301" y="319" width="1" height="24" fill="#d4d400"/>
<rect x="302" y="319" width="1" height="24" fill="#ffff00"/>
<rect x="303" y="319" width="1" height="24" fill="#ffff00"/>
<rect x="304" y="319" width="1" height="24" fill="#d4d400"/>
<rect x="305" y="319" width="1" height="24" fill="#d4d400"/>
<rect x="306" y="319" width="1" height="24" fill="#ffff00"/>
<rect x="307" y="319" width="1" height="24" fill="#d4d400"/>
<rect x="308" y="319" width="1" height="24" fill="#d4d400"/>
<rect x="309" y="319" width="1" height="24" fill="#ffff00"/>
<rect x="310" y="319" width="1" height="24" fill="#ffff00"/>
<rect x="311" y="319" width="1" height="24" fill="#d4d400"/>
<rect x="312" y="319" width="1" height="24" fill="#ffff00"/>
<rect x="313" y="319" width="1" height="24" fill="#ffff00"/>
<rect x="314" y="319" width="1" height="24" fill="#d4d400"/>
<rect x="315" y="319" width="1" height="24" fill="#d4d400"/>
<rect x="316" y="319" width="1" height="24" fill="#ffff00"/>
<rect x="317" y="319" width="1" height="24" fill="#d4d400"/>
<rect x="318" y="319" width="1" height="24" fill="#d4d400"/>
<rect x="320" y="319" width="1" height="24" fill="#ffff00"/>
<rect x="321" y="319" width="1" height="24" fill="#d4d400"/>
<rect x="322" y="319" width="1" height="24" fill="#ffff00"/>
<rect x="323" y="319" width="1" height="24" fill="#ffff00"/>
<rect x="324" y="319" width="1" height="24" fill="#d4d400"/>
<rect x="325" y="319" width="1" height="24" fill="#d4d400"/>
<rect x="326" y="319" width="1" height="24" fill="#ffff00"/>
<rect x="327" y="319" width="1" height="24" fill="#d4d400"/>
<rect x="328" y="319" width="1" height="24" fill="#d4d400"/>
<rect x="329" y="319" width="1" height="24" fill="#ffff00"/>
<rect x="330" y="319" width="1" height="24" fill="#ffff00"/>
<rect x="331" y="319" width="1" height="24" fill="#d4d400"/>
<rect x="332" y="319" width="1" height="24" fill="#ffff00"/>
<rect x="333" y="319" width="1" height="24" fill="#ffff00"/>
<rect x="334" y="319" width="1" height="24" fill="#d4d400"/>
<rect x="335" y="319" width="1" height="24" fill="#d4d400"/>
<rect x="336" y="319" width="1" height="24" fill="#ffff00"/>
<rect x="337" y="319" width="1" height="24" fill="#d4d400"/>
<rect x="338" y="319" width="1" height="24" fill="#d4d400"/>
<rect x="340" y="319" width="1" height="24" fill="#ffff00"/>
<rect x="341" y="319" width="1" height="24" fill="#d4d400"/>
<rect x="342" y="319" width="1" height="24" fill="#ffff00"/>
<rect x="343" y="319" width="1" height="24" fill="#ffff00"/>
<rect x="344" y="319" width="1" height="24" fill="#d4d400"/>
<rect x="345" y="319" width="1" height="24" fill="#d4d400"/>
<rect x="346" y="319" width="1" height="24" fill="#ffff00"/>
<rect x="347" y="319" width="1" height="24" fill="#ffff00"/>
<rect x="348" y="319" width="1" height="24" fill="#d4d400"/>
<rect x="349" y="319" width="1" height="24" fill="#ffff00"/>
<rect x="350" y="319" width="1" height="24" fill="#ffff00"/>
<rect x="351" y="319" width="1" height="24" fill="#d4d400"/>
<rect x="352" y="319" width="1" height="24" fill="#d4d400"/>
<rect x="353" y="319" width="1" height="24" fill="#ffff00"/>
<rect x="354" y="319" width="1" height="24" fill="#d4d400"/>
<rect x="355" y="319" width="1" height="24" fill="#d4d400"/>
<rect x="356" y="319" width="1" height="24" fill="#ffff00"/>
<rect x="357" y="319" width="1" height="24" fill="#ffff00"/>
<rect x="358" y="319" width="1" height="24" fill="#d4d400"/>
<rect x="359" y="319" width="1" height="24" fill="#ffff00"/>
<rect x="361" y="319" width="1" height="24" fill="#d4d400"/>
<rect x="362" y="319" width="1" height="24" fill="#d4d400"/>
<rect x="363" y="319" width="1" height="24" fill="#ffff00"/>
<rect x="364" y="319" width="1" height="24" fill="#d4d400"/>
<rect x="365" y="319" width="1" height="24" fill="#d4d400"/>
<rect x="367" y="319" width="1" height="24" fill="#ffff00"/>
<rect x="368" y="319" width="1" height="24" fill="#d4d400"/>
<rect x="369" y="319" width="1" height="24" fill="#ffff00"/>
<rect x="370" y="319" width="1" height="24" fill="#ffff00"/>
<rect x="371" y="319" width="1" height="24" fill="#d4d400"/>
<rect x="373" y="319" width="1" height="24" fill="#ffff00"/>
<rect x="374" y="319" width="1" height="24" fill="#d4d400"/>
<rect x="375" y="319" width="1" height="24" fill="#d4d400"/>
<rect x="376" y="319" width="1" height="24" fill="#ffff00"/>
<rect x="377" y="319" width="1" height="24" fill="#ffff00"/>
<rect x="378" y="319" width="1" height="24" fill="#d4d400"/>
<rect x="379" y="319" width="1" height="24" fill="#ffff00"/>
<rect x="381" y="319" width="1" height="24" fill="#d4d400"/>
<rect x="382" y="319" width="1" height="24" fill="#d4d400"/>
<rect x="383" y="319" width="1" height="24" fill="#ffff00"/>
<rect x="384" y="319" width="1" height="24" fill="#d4d400"/>
<rect x="385" y="319" width="1" height="24" fill="#d4d400"/>
<rect x="386" y="319" width="1" height="24" fill="#ffff00"/>
<rect x="387" y="319" width="1" height="24" fill="#ffff00"/>
<rect x="388" y="319" width="1" height="24" fill="#d4d400"/>
<rect x="389" y="319" width="1" height="24" fill="#ffff00"/>
<rect x="390" y="319" width="1" height="24" fill="#ffff00"/>
<rect x="391" y="319" width="1" height="24" fill="#d4d400"/>
<rect x="392" y="319" width="1" height="24" fill="#d4d400"/>
<rect x="393" y="319" width="1" height="24" fill="#ffff00"/>
<rect x="394" y="319" width="1" height="24" fill="#d4d400"/>
<rect x="395" y="319" width="1" height="24" fill="#d4d400"/>
<rect x="396" y="319" width="1" height="24" fill="#ffff00"/>
<rect x="397" y="319" width="1" height="24" fill="#ffff00"/>
<rect x="398" y="319" width="1" height="24" fill="#d4d400"/>
<rect x="399" y="319" width="1" height="24" fill="#ffff00"/>
<rect x="401" y="319" width="1" height="24" fill="#d4d400"/>
<rect x="402" y="319" width="1" height="24" fill="#d4d400"/>
<rect x="403" y="319" width="1" height="24" fill="#ffff00"/>
<rect x="404" y="319" width="1" height="24" fill="#d4d400"/>
<rect x="405" y="319" width="1" height="24" fill="#d4d400"/>
<rect x="406" y="319" width="1" height="24" fill="#ffff00"/>
<rect x="407" y="319" width="1" height="24" fill="#ffff00"/>
<rect x="408" y="319" width="1" height="24" fill="#d4d400"/>
<rect x="409" y="319" width="1" height="24" fill="#ffff00"/>
<rect x="410" y="319" width="1" height="24" fill="#ffff00"/>
<rect x="411" y="319" width="1" height="24" fill="#d4d400"/>
<rect x="412" y="319" width="1" height="24" fill="#d4d400"/>
<rect x="413" y="319" width="1" height="24" fill="#ffff00"/>
<rect x="414" y="319" width="1" height="24" fill="#d4d400"/>
<rect x="415" y="319" width="1" height="24" fill="#d4d400"/>
<rect x="416" y="319" width="1" height="24" fill="#ffff00"/>
<rect x="417" y="319" width="1" height="24" fill="#ffff00"/>
<rect x="418" y="319" width="1" height="24" fill="#d4d400"/>
<rect x="419" y="319" width="1" height="24" fill="#ffff00"/>
<rect x="421" y="319" width="1" height="24" fill="#d4d400"/>
<rect x="422" y="319" width="1" height="24" fill="#d4d400"/>
<rect x="423" y="319" width="1" height="24" fill="#ffff00"/>
<rect x="424" y="319" width="1" height="24" fill="#d4d400"/>
<rect x="425" y="319" width="1" height="24" fill="#d4d400"/>
<rect x="426" y="319" width="1" height="24" fill="#ffff00"/>
<rect x="427" y="319" width="1" height="24" fill="#ffff00"/>
<rect x="428" y="319" width="1" height="24" fill="#d4d400"/>
<rect x="429" y="319" width="1" height="24" fill="#d4d400"/>
<rect x="430" y="319" width="1" height="24" fill="#ffff00"/>
<rect x="431" y="319" width="1" height="24" fill="#d4d400"/>
<rect x="432" y="319" width="1" height="24" fill="#d4d400"/>
<rect x="433" y="319" width="1" height="24" fill="#ffff00"/>
<rect x="434" y="319" width="1" height="24" fill="#ffff00"/>
<rect x="435" y="319" width="1" height="24" fill="#d4d400"/>
<rect x="436" y="319" width="1" height="24" fill="#ffff00"/>
<rect x="437" y="319" width="1" height="24" fill="#ffff00"/>
<rect x="438" y="319" width="1" height="24" fill="#d4d400"/>
<rect x="439" y="319" width="1" height="24" fill="#d4d400"/>
<rect x="441" y="319" width="1" height="24" fill="#d4d400"/>
<rect x="442" y="319" width="1" height="24" fill="#d4d400"/>
<rect x="443" y="319" width="1" height="24" fill="#ffff00"/>
<rect x="444" y="319" width="1" height="24" fill="#ffff00"/>
<rect x="445" y="319" width="1" height="24" fill="#d4d400"/>
<rect x="446" y="319" width="1" height="24" fill="#ffff00"/>
<rect x="447" y="319" width="1" height="24" fill="#ffff00"/>
<rect x="448" y="319" width="1" height="24" fill="#d4d400"/>
<rect x="449" y="319" width="1" height="24" fill="#d4d400"/>
<rect x="450" y="319" width="1" height="24" fill="#ffff00"/>
<rect x="451" y="319" width="1" height="24" fill="#d4d400"/>
<rect x="452" y="319" width="1" height="24" fill="#d4d400"/>
<rect x="453" y="319" width="1" height="24" fill="#ffff00"/>
<rect x="454" y="319" width="1" height="24" fill="#ffff00"/>
<rect x="455" y="319" width="1" height="24" fill="#d4d400"/>
<rect x="456" y="319" width="1" height="24" fill="#ffff00"/>
<rect x="130" y="343" width="2" height="23" fill="#98f0ff"/>
<rect x="211" y="343" width="1" height="23" fill="#00c4ee"/>
<rect x="291" y="343" width="1" height="23" fill="#98f0ff"/>
<rect x="372" y="343" width="1" height="23" fill="#00c4ee"/>
<rect x="452" y="343" width="1" height="23" fill="#98f0ff"/>
<rect x="205" y="366" width="1" height="24" fill="#00ff00"/>
<rect x="366" y="366" width="1" height="24" fill="#00ff00"/>
<rect x="211" y="390" width="1" height="23" fill="#98f0ff"/>
<rect x="372" y="390" width="1" height="23" fill="#00c4ee"/>
<rect x="108" y="69" width="564" height="8" fill="#fff"/>
<rect x="114" y="38" width="1" height="1" fill="#fff"/>
<rect x="120" y="38" width="1" height="1" fill="#fff"/>
<rect x="126" y="38" width="1" height="1" fill="#fff"/>
<rect x="132" y="38" width="1" height="1" fill="#fff"/>
<rect x="138" y="38" width="1" height="1" fill="#fff"/>
<rect x="144" y="38" width="1" height="1" fill="#fff"/>
<rect x="150" y="38" width="1" height="1" fill="#fff"/>
<rect x="156" y="38" width="1" height="1" fill="#fff"/>
<rect x="162" y="38" width="1" height="1" fill="#fff"/>
<rect x="168" y="38" width="1" height="1" fill="#fff"/>
<rect x="174" y="38" width="1" height="1" fill="#fff"/>
<rect x="180" y="38" width="1" height="1" fill="#fff"/>
<rect x="186" y="38" width="1" height="1" fill="#fff"/>
<rect x="192" y="38" width="1" height="1" fill="#fff"/>
<rect x="198" y="38" width="1" height="1" fill="#fff"/>
<rect x="204" y="38" width="1" height="1" fill="#fff"/>
<rect x="210" y="38" width="1" height="1" fill="#fff"/>
<rect x="216" y="38" width="1" height="1" fill="#fff"/>
<rect x="222" y="38" width="1" height="1" fill="#fff"/>
<rect x="228" y="38" width="1" height="1" fill="#fff"/>
<rect x="234" y="38" width="1" height="1" fill="#fff"/>
<rect x="240" y="38" width="1" height="1" fill="#fff"/>
<rect x="246" y="38" width="1" height="1" fill="#fff"/>
<rect x="252" y="38" width="1" height="1" fill="#fff"/>
<rect x="258" y="38" width="1" height="1" fill="#fff"/>
<rect x="264" y="38" width="1" height="1" fill="#fff"/>
<rect x="270" y="38" width="1" height="1" fill="#fff"/>
<rect x="276" y="38" width="1" height="1" fill="#fff"/>
<rect x="282" y="38" width="1" height="1" fill="#fff"/>
<rect x="288" y="38" width="1" height="1" fill="#fff"/>
<rect x="294" y="38" width="1" height="1" fill="#fff"/>
<rect x="300" y="38" width="1" height="1" fill="#fff"/>
<rect x="306" y="38" width="1" height="1" fill="#fff"/>
<rect x="312" y="38" width="1" height="1" fill="#fff"/>
<rect x="318" y="38" width="1" height="1" fill="#fff"/>
<rect x="324" y="38" width="1" height="1" fill="#fff"/>
<rect x="330" y="38" width="1" height="1" fill="#fff"/>
<rect x="336" y="38" width="1" height="1" fill="#fff"/>
<rect x="342" y="38" width="1" height="1" fill="#fff"/>
<rect x="348" y="38" width="1" height="1" fill="#fff"/>
<rect x="354" y="38" width="1" height="1" fill="#fff"/>
<rect x="360" y="38" width="1" height="1" fill="#fff"/>
<rect x="366" y="38" width="1" height="1" fill="#fff"/>
<rect x="372" y="38" width="1" height="1" fill="#fff"/>
<rect x="378" y="38" width="1" height="1" fill="#fff"/>
<rect x="384" y="38" width="1" height="1" fill="#fff"/>
<rect x="390" y="38" width="1" height="1" fill="#fff"/>
<rect x="396" y="38" width="1" height="1" fill="#fff"/>
<rect x="402" y="38" width="1" height="1" fill="#fff"/>
<rect x="408" y="38" width="1" height="1" fill="#fff"/>
<rect x="414" y="38" width="1" height="1" fill="#fff"/>
<rect x="420" y="38" width="1" height="1" fill="#fff"/>
<rect x="426" y="38" width="1" height="1" fill="#fff"/>
<rect x="432" y="38" width="1" height="1" fill="#fff"/>
<rect x="438" y="38" width="1" height="1" fill="#fff"/>
<rect x="444" y="38" width="1" height="1" fill="#fff"/>
<rect x="450" y="38" width="1" height="1" fill="#fff"/>
<rect x="456" y="38" width="1" height="1" fill="#fff"/>
<rect x="462" y="38" width="1" height="1" fill="#fff"/>
<rect x="468" y="38" width="1" height="1" fill="#fff"/>
<rect x="474" y="38" width="1" height="1" fill="#fff"/>
<rect x="480" y="38" width="1" height="1" fill="#fff"/>
<rect x="486" y="38" width="1" height="1" fill="#fff"/>
<rect x="492" y="38" width="1" height="1" fill="#fff"/>
<rect x="498" y="38" width="1" height="1" fill="#fff"/>
<rect x="504" y="38" width="1" height="1" fill="#fff"/>
<rect x="510" y="38" width="1" height="1" fill="#fff"/>
<rect x="516" y="38" width="1" height="1" fill="#fff"/>
<rect x="522" y="38" width="1" height="1" fill="#fff"/>
<rect x="528" y="38" width="1" height="1" fill="#fff"/>
<rect x="534" y="38" width="1" height="1" fill="#fff"/>
<rect x="540" y="38" width="1" height="1" fill="#fff"/>
<rect x="546" y="38" width="1" height="1" fill="#fff"/>
<rect x="552" y="38" width="1" height="1" fill="#fff"/>
<rect x="558" y="38" width="1" height="1" fill="#fff"/>
<rect x="564" y="38" width="1" height="1" fill="#fff"/>
<rect x="570" y="38" width="1" height="1" fill="#fff"/>
<rect x="576" y="38" width="1" height="1" fill="#fff"/>
<rect x="582" y="38" width="1" height="1" fill="#fff"/>
<rect x="588" y="38" width="1" height="1" fill="#fff"/>
<rect x="594" y="38" width="1" height="1" fill="#fff"/>
<rect x="600" y="38" width="1" height="1" fill="#fff"/>
<rect x="606" y="38" width="1" height="1" fill="#fff"/>
<rect x="612" y="38" width="1" height="1" fill="#fff"/>
<rect x="618" y="38" width="1" height="1" fill="#fff"/>
<rect x="624" y="38" width="1" height="1" fill="#fff"/>
<rect x="630" y="38" width="1" height="1" fill="#fff"/>
<rect x="636" y="38" width="1" height="1" fill="#fff"/>
<rect x="642" y="38" width="1" height="1" fill="#fff"/>
<rect x="648" y="38" width="1" height="1" fill="#fff"/>
<rect x="654" y="38" width="1" height="1" fill="#fff"/>
<rect x="660" y="38" width="1" height="1" fill="#fff"/>
<rect x="666" y="38" width="1" height="1" fill="#fff"/>
<rect x="114" y="48" width="1" height="1" fill="#fff"/>
<rect x="120" y="48" width="1" height="1" fill="#fff"/>
<rect x="126" y="48" width="1" height="1" fill="#fff"/>
<rect x="132" y="48" width="1" height="1" fill="#fff"/>
<rect x="138" y="48" width="1" height="1" fill="#fff"/>
<rect x="144" y="48" width="1" height="1" fill="#fff"/>
<rect x="150" y="48" width="1" height="1" fill="#fff"/>
<rect x="156" y="48" width="1" height="1" fill="#fff"/>
<rect x="162" y="48" width="1" height="1" fill="#fff"/>
<rect x="168" y="48" width="1" height="1" fill="#fff"/>
<rect x="174" y="48" width="1" height="1" fill="#fff"/>
<rect x="180" y="48" width="1" height="1" fill="#fff"/>
<rect x="186" y="48" width="1" height="1" fill="#fff"/>
<rect x="192" y="48" width="1" height="1" fill="#fff"/>
<rect x="198" y="48" width="1" height="1" fill="#fff"/>
<rect x="204" y="48" width="1" height="1" fill="#fff"/>
<rect x="210" y="48" width="1" height="1" fill="#fff"/>
<rect x="216" y="48" width="1" height="1" fill="#fff"/>
<rect x="222" y="48" width="1" height="1" fill="#fff"/>
<rect x="228" y="48" width="1" height="1" fill="#fff"/>
<rect x="234" y="48" width="1" height="1" fill="#fff"/>
<rect x="240" y="48" width="1" height="1" fill="#fff"/>
<rect x="246" y="48" width="1" height="1" fill="#fff"/>
<rect x="252" y="48" width="1" height="1" fill="#fff"/>
<rect x="258" y="48" width="1" height="1" fill="#fff"/>
<rect x="264" y="48" width="1" height="1" fill="#fff"/>
<rect x="270" y="48" width="1" height="1" fill="#fff"/>
<rect x="276" y="48" width="1" height="1" fill="#fff"/>
<rect x="282" y="48" width="1" height="1" fill="#fff"/>
<rect x="288" y="48" width="1" height="1" fill="#fff"/>
<rect x="294" y="48" width="1" height="1" fill="#fff"/>
<rect x="300" y="48" width="1" height="1" fill="#fff"/>
<rect x="306" y="48" width="1" height="1" fill="#fff"/>
<rect x="312" y="48" width="1" height="1" fill="#fff"/>
<rect x="318" y="48" width="1" height="1" fill="#fff"/>
<rect x="324" y="48" width="1" height="1" fill="#fff"/>
<rect x="330" y="48" width="1" height="1" fill="#fff"/>
<rect x="336" y="48" width="1" height="1" fill="#fff"/>
<rect x="342" y="48" width="1" height="1" fill="#fff"/>
<rect x="348" y="48" width="1" height="1" fill="#fff"/>
<rect x="354" y="48" width="1" height="1" fill="#fff"/>
<rect x="360" y="48" width="1" height="1" fill="#fff"/>
<rect x="366" y="48" width="1" height="1" fill="#fff"/>
<rect x="372" y="48" width="1" height="1" fill="#fff"/>
<rect x="378" y="48" width="1" height="1" fill="#fff"/>
<rect x="384" y="48" width="1" height="1" fill="#fff"/>
<rect x="390" y="48" width="1" height="1" fill="#fff"/>
<rect x="396" y="48" width="1" height="1" fill="#fff"/>
<rect x="402" y="48" width="1" height="1" fill="#fff"/>
<rect x="408" y="48" width="1" height="1" fill="#fff"/>
<rect x="414" y="48" width="1" height="1" fill="#fff"/>
<rect x="420" y="48" width="1" height="1" fill="#fff"/>
<rect x="426" y="48" width="1" height="1" fill="#fff"/>
<rect x="432" y="48" width="1" height="1" fill="#fff"/>
<rect x="438" y="48" width="1" height="1" fill="#fff"/>
<rect x="444" y="48" width="1" height="1" fill="#fff"/>
<rect x="450" y="48" width="1" height="1" fill="#fff"/>
<rect x="456" y="48" width="1" height="1" fill="#fff"/>
<rect x="462" y="48" width="1" height="1" fill="#fff"/>
<rect x="468" y="48" width="1" height="1" fill="#fff"/>
<rect x="474" y="48" width="1" height="1" fill="#fff"/>
<rect x="480" y="48" width="1" height="1" fill="#fff"/>
<rect x="486" y="48" width="1" height="1" fill="#fff"/>
<rect x="492" y="48" width="1" height="1" fill="#fff"/>
<rect x="498" y="48" width="1" height="1" fill="#fff"/>
<rect x="504" y="48" width="1" height="1" fill="#fff"/>
<rect x="510" y="48" width="1" height="1" fill="#fff"/>
<rect x="516" y="48" width="1" height="1" fill="#fff"/>
<rect x="522" y="48" width="1" height="1" fill="#fff"/>
<rect x="528" y="48" width="1" height="1" fill="#fff"/>
<rect x="534" y="48" width="1" height="1" fill="#fff"/>
<rect x="540" y="48" width="1" height="1" fill="#fff"/>
<rect x="546" y="48" width="1" height="1" fill="#fff"/>
<rect x="552" y="48" width="1" height="1" fill="#fff"/>
<rect x="558" y="48" width="1" height="1" fill="#fff"/>
<rect x="564" y="48" width="1" height="1" fill="#fff"/>
<rect x="570" y="48" width="1" height="1" fill="#fff"/>
<rect x="576" y="48" width="1" height="1" fill="#fff"/>
<rect x="582" y="48" width="1" height="1" fill="#fff"/>
<rect x="588" y="48" width="1" height="1" fill="#fff"/>
<rect x="594" y="48" width="1" height="1" fill="#fff"/>
<rect x="600" y="48" width="1" height="1" fill="#fff"/>
<rect x="606" y="48" width="1" height="1" fill="#fff"/>
<rect x="612" y="48" width="1" height="1" fill="#fff"/>
<rect x="618" y="48" width="1" height="1" fill="#fff"/>
<rect x="624" y="48" width="1" height="1" fill="#fff"/>
<rect x="630" y="48" width="1" height="1" fill="#fff"/>
<rect x="636" y="48" width="1" height="1" fill="#fff"/>
<rect x="642" y="48" width="1" height="1" fill="#fff"/>
<rect x="648" y="48" width="1" height="1" fill="#fff"/>
<rect x="654" y="48" width="1" height="1" fill="#fff"/>
<rect x="660" y="48" width="1" height="1" fill="#fff"/>
<rect x="666" y="48" width="1" height="1" fill="#fff"/>
<rect x="114" y="57" width="1" height="1" fill="#fff"/>
<rect x="120" y="57" width="1" height="1" fill="#fff"/>
<rect x="126" y="57" width="1" height="1" fill="#fff"/>
<rect x="132" y="57" width="1" height="1" fill="#fff"/>
<rect x="138" y="57" width="1" height="1" fill="#fff"/>
<rect x="144" y="57" width="1" height="1" fill="#fff"/>
<rect x="150" y="57" width="1" height="1" fill="#fff"/>
<rect x="156" y="57" width="1" height="1" fill="#fff"/>
<rect x="162" y="57" width="1" height="1" fill="#fff"/>
<rect x="168" y="57" width="1" height="1" fill="#fff"/>
<rect x="174" y="57" width="1" height="1" fill="#fff"/>
<rect x="180" y="57" width="1" height="1" fill="#fff"/>
<rect x="186" y="57" width="1" height="1" fill="#fff"/>
<rect x="192" y="57" width="1" height="1" fill="#fff"/>
<rect x="198" y="57" width="1" height="1" fill="#fff"/>
<rect x="204" y="57" width="1" height="1" fill="#fff"/>
<rect x="210" y="57" width="1" height="1" fill="#fff"/>
<rect x="216" y="57" width="1" height="1" fill="#fff"/>
<rect x="222" y="57" width="1" height="1" fill="#fff"/>
<rect x="228" y="57" width="1" height="1" fill="#fff"/>
<rect x="234" y="57" width="1" height="1" fill="#fff"/>
<rect x="240" y="57" width="1" height="1" fill="#fff"/>
<rect x="246" y="57" width="1" height="1" fill="#fff"/>
<rect x="252" y="57" width="1" height="1" fill="#fff"/>
<rect x="258" y="57" width="1" height="1" fill="#fff"/>
<rect x="264" y="57" width="1" height="1" fill="#fff"/>
<rect x="270" y="57" width="1" height="1" fill="#fff"/>
<rect x="276" y="57" width="1" height="1" fill="#fff"/>
<rect x="282" y="57" width="1" height="1" fill="#fff"/>
<rect x="288" y="57" width="1" height="1" fill="#fff"/>
<rect x="294" y="57" width="1" height="1" fill="#fff"/>
<rect x="300" y="57" width="1" height="1" fill="#fff"/>
<rect x="306" y="57" width="1" height="1" fill="#fff"/>
<rect x="312" y="57" width="1" height="1" fill="#fff"/>
<rect x="318" y="57" width="1" height="1" fill="#fff"/>
<rect x="324" y="57" width="1" height="1" fill="#fff"/>
<rect x="330" y="57" width="1" height="1" fill="#fff"/>
<rect x="336" y="57" width="1" height="1" fill="#fff"/>
<rect x="342" y="57" width="1" height="1" fill="#fff"/>
<rect x="348" y="57" width="1" height="1" fill="#fff"/>
<rect x="354" y="57" width="1" height="1" fill="#fff"/>
<rect x="360" y="57" width="1" height="1" fill="#fff"/>
<rect x="366" y="57" width="1" height="1" fill="#fff"/>
<rect x="372" y="57" width="1" height="1" fill="#fff"/>
<rect x="378" y="57" width="1" height="1" fill="#fff"/>
<rect x="384" y="57" width="1" height="1" fill="#fff"/>
<rect x="390" y="57" width="1" height="1" fill="#fff"/>
<rect x="396" y="57" width="1" height="1" fill="#fff"/>
<rect x="402" y="57" width="1" height="1" fill="#fff"/>
<rect x="408" y="57" width="1" height="1" fill="#fff"/>
<rect x="414" y="57" width="1" height="1" fill="#fff"/>
<rect x="420" y="57" width="1" height="1" fill="#fff"/>
<rect x="426" y="57" width="1" height="1" fill="#fff"/>
<rect x="432" y="57" width="1" height="1" fill="#fff"/>
<rect x="438" y="57" width="1" height="1" fill="#fff"/>
<rect x="444" y="57" width="1" height="1" fill="#fff"/>
<rect x="450" y="57" width="1" height="1" fill="#fff"/>
<rect x="456" y="57" width="1" height="1" fill="#fff"/>
<rect x="462" y="57" width="1" height="1" fill="#fff"/>
<rect x="468" y="57" width="1" height="1" fill="#fff"/>
<rect x="474" y="57" width="1" height="1" fill="#fff"/>
<rect x="480" y="57" width="1" height="1" fill="#fff"/>
<rect x="486" y="57" width="1" height="1" fill="#fff"/>
<rect x="492" y="57" width="1" height="1" fill="#fff"/>
<rect x="498" y="57" width="1" height="1" fill="#fff"/>
<rect x="504" y="57" width="1" height="1" fill="#fff"/>
<rect x="510" y="57" width="1" height="1" fill="#fff"/>
<rect x="516" y="57" width="1" height="1" fill="#fff"/>
<rect x="522" y="57" width="1" height="1" fill="#fff"/>
<rect x="528" y="57" width="1" height="1" fill="#fff"/>
<rect x="534" y="57" width="1" height="1" fill="#fff"/>
<rect x="540" y="57" width="1" height="1" fill="#fff"/>
<rect x="546" y="57" width="1" height="1" fill="#fff"/>
<rect x="552" y="57" width="1" height="1" fill="#fff"/>
<rect x="558" y="57" width="1" height="1" fill="#fff"/>
<rect x="564" y="57" width="1" height="1" fill="#fff"/>
<rect x="570" y="57" width="1" height="1" fill="#fff"/>
<rect x="576" y="57" width="1" height="1" fill="#fff"/>
<rect x="582" y="57" width="1" height="1" fill="#fff"/>
<rect x="588" y="57" width="1" height="1" fill="#fff"/>
<rect x="594" y="57" width="1" height="1" fill="#fff"/>
<rect x="600" y="57" width="1" height="1" fill="#fff"/>
<rect x="606" y="57" width="1" height="1" fill="#fff"/>
<rect x="612" y="57" width="1" height="1" fill="#fff"/>
<rect x="618" y="57" width="1" height="1" fill="#fff"/>
<rect x="624" y="57" width="1" height="1" fill="#fff"/>
<rect x="630" y="57" width="1" height="1" fill="#fff"/>
<rect x="636" y="57" width="1" height="1" fill="#fff"/>
<rect x="642" y="57" width="1" height="1" fill="#fff"/>
<rect x="648" y="57" width="1" height="1" fill="#fff"/>
<rect x="654" y="57" width="1" height="1" fill="#fff"/>
<rect x="660" y="57" width="1" height="1" fill="#fff"/>
<rect x="666" y="57" width="1" height="1" fill="#fff"/>
<rect x="114" y="66" width="1" height="1" fill="#fff"/>
<rect x="120" y="66" width="1" height="1" fill="#fff"/>
<rect x="126" y="66" width="1" height="1" fill="#fff"/>
<rect x="132" y="66" width="1" height="1" fill="#fff"/>
<rect x="138" y="66" width="1" height="1" fill="#fff"/>
<rect x="144" y="66" width="1" height="1" fill="#fff"/>
<rect x="150" y="66" width="1" height="1" fill="#fff"/>
<rect x="156" y="66" width="1" height="1" fill="#fff"/>
<rect x="162" y="66" width="1" height="1" fill="#fff"/>
<rect x="168" y="66" width="1" height="1" fill="#fff"/>
<rect x="174" y="66" width="1" height="1" fill="#fff"/>
<rect x="180" y="66" width="1" height="1" fill="#fff"/>
<rect x="186" y="66" width="1" height="1" fill="#fff"/>
<rect x="192" y="66" width="1" height="1" fill="#fff"/>
<rect x="198" y="66" width="1" height="1" fill="#fff"/>
<rect x="204" y="66" width="1" height="1" fill="#fff"/>
<rect x="210" y="66" width="1" height="1" fill="#fff"/>
<rect x="216" y="66" width="1" height="1" fill="#fff"/>
<rect x="222" y="66" width="1" height="1" fill="#fff"/>
<rect x="228" y="66" width="1" height="1" fill="#fff"/>
<rect x="234" y="66" width="1" height="1" fill="#fff"/>
<rect x="240" y="66" width="1" height="1" fill="#fff"/>
<rect x="246" y="66" width="1" height="1" fill="#fff"/>
<rect x="252" y="66" width="1" height="1" fill="#fff"/>
<rect x="258" y="66" width="1" height="1" fill="#fff"/>
<rect x="264" y="66" width="1" height="1" fill="#fff"/>
<rect x="270" y="66" width="1" height="1" fill="#fff"/>
<rect x="276" y="66" width="1" height="1" fill="#fff"/>
<rect x="282" y="66" width="1" height="1" fill="#fff"/>
<rect x="288" y="66" width="1" height="1" fill="#fff"/>
<rect x="294" y="66" width="1" height="1" fill="#fff"/>
<rect x="300" y="66" width="1" height="1" fill="#fff"/>
<rect x="306" y="66" width="1" height="1" fill="#fff"/>
<rect x="312" y="66" width="1" height="1" fill="#fff"/>
<rect x="318" y="66" width="1" height="1" fill="#fff"/>
<rect x="324" y="66" width="1" height="1" fill="#fff"/>
<rect x="330" y="66" width="1" height="1" fill="#fff"/>
<rect x="336" y="66" width="1" height="1" fill="#fff"/>
<rect x="342" y="66" width="1" height="1" fill="#fff"/>
<rect x="348" y="66" width="1" height="1" fill="#fff"/>
<rect x="354" y="66" width="1" height="1" fill="#fff"/>
<rect x="360" y="66" width="1" height="1" fill="#fff"/>
<rect x="366" y="66" width="1" height="1" fill="#fff"/>
<rect x="372" y="66" width="1" height="1" fill="#fff"/>
<rect x="378" y="66" width="1" height="1" fill="#fff"/>
<rect x="384" y="66" width="1" height="1" fill="#fff"/>
<rect x="390" y="66" width="1" height="1" fill="#fff"/>
<rect x="396" y="66" width="1" height="1" fill="#fff"/>
<rect x="402" y="66" width="1" height="1" fill="#fff"/>
<rect x="408" y="66" width="1" height="1" fill="#fff"/>
<rect x="414" y="66" width="1" height="1" fill="#fff"/>
<rect x="420" y="66" width="1" height="1" fill="#fff"/>
<rect x="426" y="66" width="1" height="1" fill="#fff"/>
<rect x="432" y="66" width="1" height="1" fill="#fff"/>
<rect x="438" y="66" width="1" height="1" fill="#fff"/>
<rect x="444" y="66" width="1" height="1" fill="#fff"/>
<rect x="450" y="66" width="1" height="1" fill="#fff"/>
<rect x="456" y="66" width="1" height="1" fill="#fff"/>
<rect x="462" y="66" width="1" height="1" fill="#fff"/>
<rect x="468" y="66" width="1" height="1" fill="#fff"/>
<rect x="474" y="66" width="1" height="1" fill="#fff"/>
<rect x="480" y="66" width="1" height="1" fill="#fff"/>
<rect x="486" y="66" width="1" height="1" fill="#fff"/>
<rect x="492" y="66" width="1" height="1" fill="#fff"/>
<rect x="498" y="66" width="1" height="1" fill="#fff"/>
<rect x="504" y="66" width="1" height="1" fill="#fff"/>
<rect x="510" y="66" width="1" height="1" fill="#fff"/>
<rect x="516" y="66" width="1" height="1" fill="#fff"/>
<rect x="522" y="66" width="1" height="1" fill="#fff"/>
<rect x="528" y="66" width="1" height="1" fill="#fff"/>
<rect x="534" y="66" width="1" height="1" fill="#fff"/>
<rect x="540" y="66" width="1" height="1" fill="#fff"/>
<rect x="546" y="66" width="1" height="1" fill="#fff"/>
<rect x="552" y="66" width="1" height="1" fill="#fff"/>
<rect x="558" y="66" width="1" height="1" fill="#fff"/>
<rect x="564" y="66" width="1" height="1" fill="#fff"/>
<rect x="570" y="66" width="1" height="1" fill="#fff"/>
<rect x="576" y="66" width="1" height="1" fill="#fff"/>
<rect x="582" y="66" width="1" height="1" fill="#fff"/>
<rect x="588" y="66" width="1" height="1" fill="#fff"/>
<rect x="594" y="66" width="1" height="1" fill="#fff"/>
<rect x="600" y="66" width="1" height="1" fill="#fff"/>
<rect x="606" y="66" width="1" height="1" fill="#fff"/>
<rect x="612" y="66" width="1" height="1" fill="#fff"/>
<rect x="618" y="66" width="1" height="1" fill="#fff"/>
<rect x="624" y="66" width="1" height="1" fill="#fff"/>
<rect x="630" y="66" width="1" height="1" fill="#fff"/>
<rect x="636" y="66" width="1" height="1" fill="#fff"/>
<rect x="642" y="66" width="1" height="1" fill="#fff"/>
<rect x="648" y="66" width="1" height="1" fill="#fff"/>
<rect x="654" y="66" width="1" height="1" fill="#fff"/>
<rect x="660" y="66" width="1" height="1" fill="#fff"/>
<rect x="666" y="66" width="1" height="1" fill="#fff"/>
<rect x="114" y="427" width="1" height="1" fill="#fff"/>
<rect x="120" y="427" width="1" height="1" fill="#fff"/>
<rect x="126" y="427" width="1" height="1" fill="#fff"/>
<rect x="132" y="427" width="1" height="1" fill="#fff"/>
<rect x="138" y="427" width="1" height="1" fill="#fff"/>
<rect x="144" y="427" width="1" height="1" fill="#fff"/>
<rect x="150" y="427" width="1" height="1" fill="#fff"/>
<rect x="156" y="427" width="1" height="1" fill="#fff"/>
<rect x="162" y="427" width="1" height="1" fill="#fff"/>
<rect x="168" y="427" width="1" height="1" fill="#fff"/>
<rect x="174" y="427" width="1" height="1" fill="#fff"/>
<rect x="180" y="427" width="1" height="1" fill="#fff"/>
<rect x="186" y="427" width="1" height="1" fill="#fff"/>
<rect x="192" y="427" width="1" height="1" fill="#fff"/>
<rect x="198" y="427" width="1" height="1" fill="#fff"/>
<rect x="204" y="427" width="1" height="1" fill="#fff"/>
<rect x="210" y="427" width="1" height="1" fill="#fff"/>
<rect x="216" y="427" width="1" height="1" fill="#fff"/>
<rect x="222" y="427" width="1" height="1" fill="#fff"/>
<rect x="228" y="427" width="1" height="1" fill="#fff"/>
<rect x="234" y="427" width="1" height="1" fill="#fff"/>
<rect x="240" y="427" width="1" height="1" fill="#fff"/>
<rect x="246" y="427" width="1" height="1" fill="#fff"/>
<rect x="252" y="427" width="1" height="1" fill="#fff"/>
<rect x="258" y="427" width="1" height="1" fill="#fff"/>
<rect x="264" y="427" width="1" height="1" fill="#fff"/>
<rect x="270" y="427" width="1" height="1" fill="#fff"/>
<rect x="276" y="427" width="1" height="1" fill="#fff"/>
<rect x="282" y="427" width="1" height="1" fill="#fff"/>
<rect x="288" y="427" width="1" height="1" fill="#fff"/>
<rect x="294" y="427" width="1" height="1" fill="#fff"/>
<rect x="300" y="427" width="1" height="1" fill="#fff"/>
<rect x="306" y="427" width="1" height="1" fill="#fff"/>
<rect x="312" y="427" width="1" height="1" fill="#fff"/>
<rect x="318" y="427" width="1" height="1" fill="#fff"/>
<rect x="324" y="427" width="1" height="1" fill="#fff"/>
<rect x="330" y="427" width="1" height="1" fill="#fff"/>
<rect x="336" y="427" width="1" height="1" fill="#fff"/>
<rect x="342" y="427" width="1" height="1" fill="#fff"/>
<rect x="348" y="427" width="1" height="1" fill="#fff"/>
<rect x="354" y="427" width="1" height="1" fill="#fff"/>
<rect x="360" y="427" width="1" height="1" fill="#fff"/>
<rect x="366" y="427" width="1" height="1" fill="#fff"/>
<rect x="372" y="427" width="1" height="1" fill="#fff"/>
<rect x="378" y="427" width="1" height="1" fill="#fff"/>
<rect x="384" y="427" width="1" height="1" fill="#fff"/>
<rect x="390" y="427" width="1" height="1" fill="#fff"/>
<rect x="396" y="427" width="1" height="1" fill="#fff"/>
<rect x="402" y="427" width="1" height="1" fill="#fff"/>
<rect x="408" y="427" width="1" height="1" fill="#fff"/>
<rect x="414" y="427" width="1" height="1" fill="#fff"/>
<rect x="420" y="427" width="1" height="1" fill="#fff"/>
<rect x="426" y="427" width="1" height="1" fill="#fff"/>
<rect x="432" y="427" width="1" height="1" fill="#fff"/>
<rect x="438" y="427" width="1" height="1" fill="#fff"/>
<rect x="444" y="427" width="1" height="1" fill="#fff"/>
<rect x="450" y="427" width="1" height="1" fill="#fff"/>
<rect x="456" y="427" width="1" height="1" fill="#fff"/>
<rect x="462" y="427" width="1" height="1" fill="#fff"/>
<rect x="468" y="427" width="1" height="1" fill="#fff"/>
<rect x="474" y="427" width="1" height="1" fill="#fff"/>
<rect x="480" y="427" width="1" height="1" fill="#fff"/>
<rect x="486" y="427" width="1" height="1" fill="#fff"/>
<rect x="492" y="427" width="1" height="1" fill="#fff"/>
<rect x="498" y="427" width="1" height="1" fill="#fff"/>
<rect x="504" y="427" width="1" height="1" fill="#fff"/>
<rect x="510" y="427" width="1" height="1" fill="#fff"/>
<rect x="516" y="427" width="1" height="1" fill="#fff"/>
<rect x="522" y="427" width="1" height="1" fill="#fff"/>
<rect x="528" y="427" width="1" height="1" fill="#fff"/>
<rect x="534" y="427" width="1" height="1" fill="#fff"/>
<rect x="540" y="427" width="1" height="1" fill="#fff"/>
<rect x="546" y="427" width="1" height="1" fill="#fff"/>
<rect x="552" y="427" width="1" height="1" fill="#fff"/>
<rect x="558" y="427" width="1" height="1" fill="#fff"/>
<rect x="564" y="427" width="1" height="1" fill="#fff"/>
<rect x="570" y="427" width="1" height="1" fill="#fff"/>
<rect x="576" y="427" width="1" height="1" fill="#fff"/>
<rect x="582" y="427" width="1" height="1" fill="#fff"/>
<rect x="588" y="427" width="1" height="1" fill="#fff"/>
<rect x="594" y="427" width="1" height="1" fill="#fff"/>
<rect x="600" y="427" width="1" height="1" fill="#fff"/>
<rect x="606" y="427" width="1" height="1" fill="#fff"/>
<rect x="612" y="427" width="1" height="1" fill="#fff"/>
<rect x="618" y="427" width="1" height="1" fill="#fff"/>
<rect x="624" y="427" width="1" height="1" fill="#fff"/>
<rect x="630" y="427" width="1" height="1" fill="#fff"/>
<rect x="636" y="427" width="1" height="1" fill="#fff"/>
<rect x="642" y="427" width="1" height="1" fill="#fff"/>
<rect x="648" y="427" width="1" height="1" fill="#fff"/>
<rect x="654" y="427" width="1" height="1" fill="#fff"/>
<rect x="660" y="427" width="1" height="1" fill="#fff"/>
<rect x="666" y="427" width="1" height="1" fill="#fff"/>
<rect x="114" y="439" width="1" height="1" fill="#fff"/>
<rect x="120" y="439" width="1" height="1" fill="#fff"/>
<rect x="126" y="439" width="1" height="1" fill="#fff"/>
<rect x="132" y="439" width="1" height="1" fill="#fff"/>
<rect x="138" y="439" width="1" height="1" fill="#fff"/>
<rect x="144" y="439" width="1" height="1" fill="#fff"/>
<rect x="150" y="439" width="1" height="1" fill="#fff"/>
<rect x="156" y="439" width="1" height="1" fill="#fff"/>
<rect x="162" y="439" width="1" height="1" fill="#fff"/>
<rect x="168" y="439" width="1" height="1" fill="#fff"/>
<rect x="174" y="439" width="1" height="1" fill="#fff"/>
<rect x="180" y="439" width="1" height="1" fill="#fff"/>
<rect x="186" y="439" width="1" height="1" fill="#fff"/>
<rect x="192" y="439" width="1" height="1" fill="#fff"/>
<rect x="198" y="439" width="1" height="1" fill="#fff"/>
<rect x="204" y="439" width="1" height="1" fill="#fff"/>
<rect x="210" y="439" width="1" height="1" fill="#fff"/>
<rect x="216" y="439" width="1" height="1" fill="#fff"/>
<rect x="222" y="439" width="1" height="1" fill="#fff"/>
<rect x="228" y="439" width="1" height="1" fill="#fff"/>
<rect x="234" y="439" width="1" height="1" fill="#fff"/>
<rect x="240" y="439" width="1" height="1" fill="#fff"/>
<rect x="246" y="439" width="1" height="1" fill="#fff"/>
<rect x="252" y="439" width="1" height="1" fill="#fff"/>
<rect x="258" y="439" width="1" height="1" fill="#fff"/>
<rect x="264" y="439" width="1" height="1" fill="#fff"/>
<rect x="270" y="439" width="1" height="1" fill="#fff"/>
<rect x="276" y="439" width="1" height="1" fill="#fff"/>
<rect x="282" y="439" width="1" height="1" fill="#fff"/>
<rect x="288" y="439" width="1" height="1" fill="#fff"/>
<rect x="294" y="439" width="1" height="1" fill="#fff"/>
<rect x="300" y="439" width="1" height="1" fill="#fff"/>
<rect x="306" y="439" width="1" height="1" fill="#fff"/>
<rect x="312" y="439" width="1" height="1" fill="#fff"/>
<rect x="318" y="439" width="1" height="1" fill="#fff"/>
<rect x="324" y="439" width="1" height="1" fill="#fff"/>
<rect x="330" y="439" width="1" height="1" fill="#fff"/>
<rect x="336" y="439" width="1" height="1" fill="#fff"/>
<rect x="342" y="439" width="1" height="1" fill="#fff"/>
<rect x="348" y="439" width="1" height="1" fill="#fff"/>
<rect x="354" y="439" width="1" height="1" fill="#fff"/>
<rect x="360" y="439" width="1" height="1" fill="#fff"/>
<rect x="366" y="439" width="1" height="1" fill="#fff"/>
<rect x="372" y="439" width="1" height="1" fill="#fff"/>
<rect x="378" y="439" width="1" height="1" fill="#fff"/>
<rect x="384" y="439" width="1" height="1" fill="#fff"/>
<rect x="390" y="439" width="1" height="1" fill="#fff"/>
<rect x="396" y="439" width="1" height="1" fill="#fff"/>
<rect x="402" y="439" width="1" height="1" fill="#fff"/>
<rect x="408" y="439" width="1" height="1" fill="#fff"/>
<rect x="414" y="439" width="1" height="1" fill="#fff"/>
<rect x="420" y="439" width="1" height="1" fill="#fff"/>
<rect x="426" y="439" width="1" height="1" fill="#fff"/>
<rect x="432" y="439" width="1" height="1" fill="#fff"/>
<rect x="438" y="439" width="1" height="1" fill="#fff"/>
<rect x="444" y="439" width="1" height="1" fill="#fff"/>
<rect x="450" y="439" width="1" height="1" fill="#fff"/>
<rect x="456" y="439" width="1" height="1" fill="#fff"/>
<rect x="462" y="439" width="1" height="1" fill="#fff"/>
<rect x="468" y="439" width="1" height="1" fill="#fff"/>
<rect x="474" y="439" width="1" height="1" fill="#fff"/>
<rect x="480" y="439" width="1" height="1" fill="#fff"/>
<rect x="486" y="439" width="1" height="1" fill="#fff"/>
<rect x="492" y="439" width="1" height="1" fill="#fff"/>
<rect x="498" y="439" width="1" height="1" fill="#fff"/>
<rect x="504" y="439" width="1" height="1" fill="#fff"/>
<rect x="510" y="439" width="1" height="1" fill="#fff"/>
<rect x="516" y="439" width="1" height="1" fill="#fff"/>
<rect x="522" y="439" width="1" height="1" fill="#fff"/>
<rect x="528" y="439" width="1" height="1" fill="#fff"/>
<rect x="534" y="439" width="1" height="1" fill="#fff"/>
<rect x="540" y="439" width="1" height="1" fill="#fff"/>
<rect x="546" y="439" width="1" height="1" fill="#fff"/>
<rect x="552" y="439" width="1" height="1" fill="#fff"/>
<rect x="558" y="439" width="1" height="1" fill="#fff"/>
<rect x="564" y="439" width="1" height="1" fill="#fff"/>
<rect x="570" y="439" width="1" height="1" fill="#fff"/>
<rect x="576" y="439" width="1" height="1" fill="#fff"/>
<rect x="582" y="439" width="1" height="1" fill="#fff"/>
<rect x="588" y="439" width="1" height="1" fill="#fff"/>
<rect x="594" y="439" width="1" height="1" fill="#fff"/>
<rect x="600" y="439" width="1" height="1" fill="#fff"/>
<rect x="606" y="439" width="1" height="1" fill="#fff"/>
<rect x="612" y="439" width="1" height="1" fill="#fff"/>
<rect x="618" y="439" width="1" height="1" fill="#fff"/>
<rect x="624" y="439" width="1" height="1" fill="#fff"/>
<rect x="630" y="439" width="1" height="1" fill="#fff"/>
<rect x="636" y="439" width="1" height="1" fill="#fff"/>
<rect x="642" y="439" width="1" height="1" fill="#fff"/>
<rect x="648" y="439" width="1" height="1" fill="#fff"/>
<rect x="654" y="439" width="1" height="1" fill="#fff"/>
<rect x="660" y="439" width="1" height="1" fill="#fff"/>
<rect x="666" y="439" width="1" height="1" fill="#fff"/>
<rect x="114" y="472" width="1" height="1" fill="#fff"/>
<rect x="120" y="472" width="1" height="1" fill="#fff"/>
<rect x="126" y="472" width="1" height="1" fill="#fff"/>
<rect x="132" y="472" width="1" height="1" fill="#fff"/>
<rect x="138" y="472" width="1" height="1" fill="#fff"/>
<rect x="144" y="472" width="1" height="1" fill="#fff"/>
<rect x="150" y="472" width="1" height="1" fill="#fff"/>
<rect x="156" y="472" width="1" height="1" fill="#fff"/>
<rect x="162" y="472" width="1" height="1" fill="#fff"/>
<rect x="168" y="472" width="1" height="1" fill="#fff"/>
<rect x="174" y="472" width="1" height="1" fill="#fff"/>
<rect x="180" y="472" width="1" height="1" fill="#fff"/>
<rect x="186" y="472" width="1" height="1" fill="#fff"/>
<rect x="192" y="472" width="1" height="1" fill="#fff"/>
<rect x="198" y="472" width="1" height="1" fill="#fff"/>
<rect x="204" y="472" width="1" height="1" fill="#fff"/>
<rect x="210" y="472" width="1" height="1" fill="#fff"/>
<rect x="216" y="472" width="1" height="1" fill="#fff"/>
<rect x="222" y="472" width="1" height="1" fill="#fff"/>
<rect x="228" y="472" width="1" height="1" fill="#fff"/>
<rect x="234" y="472" width="1" height="1" fill="#fff"/>
<rect x="240" y="472" width="1" height="1" fill="#fff"/>
<rect x="246" y="472" width="1" height="1" fill="#fff"/>
<rect x="252" y="472" width="1" height="1" fill="#fff"/>
<rect x="258" y="472" width="1" height="1" fill="#fff"/>
<rect x="264" y="472" width="1" height="1" fill="#fff"/>
<rect x="270" y="472" width="1" height="1" fill="#fff"/>
<rect x="276" y="472" width="1" height="1" fill="#fff"/>
<rect x="282" y="472" width="1" height="1" fill="#fff"/>
<rect x="288" y="472" width="1" height="1" fill="#fff"/>
<rect x="294" y="472" width="1" height="1" fill="#fff"/>
<rect x="300" y="472" width="1" height="1" fill="#fff"/>
<rect x="306" y="472" width="1" height="1" fill="#fff"/>
<rect x="312" y="472" width="1" height="1" fill="#fff"/>
<rect x="318" y="472" width="1" height="1" fill="#fff"/>
<rect x="324" y="472" width="1" height="1" fill="#fff"/>
<rect x="330" y="472" width="1" height="1" fill="#fff"/>
<rect x="336" y="472" width="1" height="1" fill="#fff"/>
<rect x="342" y="472" width="1" height="1" fill="#fff"/>
<rect x="348" y="472" width="1" height="1" fill="#fff"/>
<rect x="354" y="472" width="1" height="1" fill="#fff"/>
<rect x="360" y="472" width="1" height="1" fill="#fff"/>
<rect x="366" y="472" width="1" height="1" fill="#fff"/>
<rect x="372" y="472" width="1" height="1" fill="#fff"/>
<rect x="378" y="472" width="1" height="1" fill="#fff"/>
<rect x="384" y="472" width="1" height="1" fill="#fff"/>
<rect x="390" y="472" width="1" height="1" fill="#fff"/>
<rect x="396" y="472" width="1" height="1" fill="#fff"/>
<rect x="402" y="472" width="1" height="1" fill="#fff"/>
<rect x="408" y="472" width="1" height="1" fill="#fff"/>
<rect x="414" y="472" width="1" height="1" fill="#fff"/>
<rect x="420" y="472" width="1" height="1" fill="#fff"/>
<rect x="426" y="472" width="1" height="1" fill="#fff"/>
<rect x="432" y="472" width="1" height="1" fill="#fff"/>
<rect x="438" y="472" width="1" height="1" fill="#fff"/>
<rect x="444" y="472" width="1" height="1" fill="#fff"/>
<rect x="450" y="472" width="1" height="1" fill="#fff"/>
<rect x="456" y="472" width="1" height="1" fill="#fff"/>
<rect x="462" y="472" width="1" height="1" fill="#fff"/>
<rect x="468" y="472" width="1" height="1" fill="#fff"/>
<rect x="474" y="472" width="1" height="1" fill="#fff"/>
<rect x="480" y="472" width="1" height="1" fill="#fff"/>
<rect x="486" y="472" width="1" height="1" fill="#fff"/>
<rect x="492" y="472" width="1" height="1" fill="#fff"/>
<rect x="498" y="472" width="1" height="1" fill="#fff"/>
<rect x="504" y="472" width="1" height="1" fill="#fff"/>
<rect x="510" y="472" width="1" height="1" fill="#fff"/>
<rect x="516" y="472" width="1" height="1" fill="#fff"/>
<rect x="522" y="472" width="1" height="1" fill="#fff"/>
<rect x="528" y="472" width="1" height="1" fill="#fff"/>
<rect x="534" y="472" width="1" height="1" fill="#fff"/>
<rect x="540" y="472" width="1" height="1" fill="#fff"/>
<rect x="546" y="472" width="1" height="1" fill="#fff"/>
<rect x="552" y="472" width="1" height="1" fill="#fff"/>
<rect x="558" y="472" width="1" height="1" fill="#fff"/>
<rect x="564" y="472" width="1" height="1" fill="#fff"/>
<rect x="570" y="472" width="1" height="1" fill="#fff"/>
<rect x="576" y="472" width="1" height="1" fill="#fff"/>
<rect x="582" y="472" width="1" height="1" fill="#fff"/>
<rect x="588" y="472" width="1" height="1" fill="#fff"/>
<rect x="594" y="472" width="1" height="1" fill="#fff"/>
<rect x="600" y="472" width="1" height="1" fill="#fff"/>
<rect x="606" y="472" width="1" height="1" fill="#fff"/>
<rect x="612" y="472" width="1" height="1" fill="#fff"/>
<rect x="618" y="472" width="1" height="1" fill="#fff"/>
<rect x="624" y="472" width="1" height="1" fill="#fff"/>
<rect x="630" y="472" width="1" height="1" fill="#fff"/>
<rect x="636" y="472" width="1" height="1" fill="#fff"/>
<rect x="642" y="472" width="1" height="1" fill="#fff"/>
<rect x="648" y="472" width="1" height="1" fill="#fff"/>
<rect x="654" y="472" width="1" height="1" fill="#fff"/>
<rect x="660" y="472" width="1" height="1" fill="#fff"/>
<rect x="666" y="472" width="1" height="1" fill="#fff"/>
<rect x="108" y="475" width="8" height="9" fill="#fff"/>
<rect x="115" y="470" width="1" height="5" fill="#fff"/>
<rect x="121" y="20" width="1" height="5" fill="#fff"/>
<rect x="121" y="479" width="1" height="4" fill="#fff"/>
<rect x="155" y="20" width="1" height="5" fill="#fff"/>
<rect x="155" y="479" width="1" height="4" fill="#fff"/>
<rect x="188" y="20" width="1" height="5" fill="#fff"/>
<rect x="188" y="479" width="1" height="4" fill="#fff"/>
<rect x="222" y="20" width="1" height="10" fill="#fff"/>
<rect x="222" y="474" width="1" height="9" fill="#fff"/>
<rect x="255" y="20" width="1" height="5" fill="#fff"/>
<rect x="255" y="479" width="1" height="4" fill="#fff"/>
<rect x="289" y="20" width="1" height="5" fill="#fff"/>
<rect x="289" y="479" width="1" height="4" fill="#fff"/>
<rect x="322" y="20" width="1" height="5" fill="#fff"/>
<rect x="322" y="479" width="1" height="4" fill="#fff"/>
<rect x="356" y="20" width="1" height="5" fill="#fff"/>
<rect x="356" y="479" width="1" height="4" fill="#fff"/>
<rect x="389" y="20" width="1" height="10" fill="#fff"/>
<rect x="389" y="474" width="1" height="9" fill="#fff"/>
<rect x="423" y="20" width="1" height="5" fill="#fff"/>
<rect x="423" y="479" width="1" height="4" fill="#fff"/>
<rect x="456" y="20" width="1" height="5" fill="#fff"/>
<rect x="456" y="479" width="1" height="4" fill="#fff"/>
<rect x="490" y="20" width="1" height="5" fill="#fff"/>
<rect x="490" y="479" width="1" height="4" fill="#fff"/>
<rect x="524" y="20" width="1" height="5" fill="#fff"/>
<rect x="524" y="479" width="1" height="4" fill="#fff"/>
<rect x="557" y="20" width="1" height="10" fill="#fff"/>
<rect x="557" y="474" width="1" height="9" fill="#fff"/>
<rect x="591" y="20" width="1" height="5" fill="#fff"/>
<rect x="591" y="479" width="1" height="4" fill="#fff"/>
<rect x="624" y="20" width="1" height="5" fill="#fff"/>
<rect x="624" y="479" width="1" height="4" fill="#fff"/>
<rect x="658" y="20" width="1" height="5" fill="#fff"/>
<rect x="658" y="479" width="1" height="4" fill="#fff"/>
<rect x="108" y="19" width="564" height="1" fill="#fff"/>
<rect x="108" y="19" width="1" height="465" fill="#fff"/>
<rect x="671" y="19" width="1" height="465" fill="#fff"/>
<rect x="116" y="483" width="556" height="1" fill="#ff0000"/>
<rect x="116" y="476" width="1" height="7" fill="#fff"/>
<rect x="117" y="476" width="1" height="7" fill="#fff"/>
<rect x="118" y="476" width="1" height="8" fill="#fff"/>
<rect x="119" y="480" width="1" height="3" fill="#fff"/>
<rect x="120" y="478" width="1" height="5" fill="#fff"/>
<rect x="121" y="476" width="1" height="8" fill="#fff"/>
<rect x="122" y="479" width="1" height="4" fill="#fff"/>
<rect x="123" y="478" width="1" height="5" fill="#fff"/>
<rect x="124" y="476" width="1" height="8" fill="#fff"/>
<rect x="125" y="479" width="1" height="4" fill="#fff"/>
<rect x="126" y="480" width="1" height="3" fill="#fff"/>
<rect x="127" y="478" width="1" height="5" fill="#fff"/>
<rect x="128" y="476" width="1" height="8" fill="#fff"/>
<rect x="129" y="479" width="1" height="4" fill="#fff"/>
<rect x="130" y="478" width="1" height="5" fill="#fff"/>
<rect x="131" y="483" width="1" height="1" fill="#fff"/>
<rect x="132" y="480" width="1" height="3" fill="#fff"/>
<rect x="133" y="478" width="1" height="5" fill="#fff"/>
<rect x="134" y="476" width="1" height="8" fill="#fff"/>
<rect x="135" y="478" width="1" height="5" fill="#fff"/>
<rect x="136" y="480" width="1" height="3" fill="#fff"/>
<rect x="137" y="479" width="1" height="4" fill="#fff"/>
<rect x="138" y="476" width="1" height="8" fill="#fff"/>
<rect x="139" y="478" width="1" height="5" fill="#fff"/>
<rect x="140" y="478" width="1" height="5" fill="#fff"/>
<rect x="141" y="476" width="1" height="8" fill="#fff"/>
<rect x="142" y="479" width="1" height="4" fill="#fff"/>
<rect x="143" y="479" width="1" height="4" fill="#fff"/>
<rect x="144" y="476" width="1" height="8" fill="#fff"/>
<rect x="145" y="479" width="1" height="4" fill="#fff"/>
<rect x="146" y="480" width="1" height="3" fill="#fff"/>
<rect x="147" y="479" width="1" height="4" fill="#fff"/>
<rect x="148" y="476" width="1" height="8" fill="#fff"/>
<rect x="149" y="478" width="1" height="5" fill="#fff"/>
<rect x="150" y="479" width="1" height="4" fill="#fff"/>
<rect x="151" y="476" width="1" height="8" fill="#fff"/>
<rect x="152" y="478" width="1" height="5" fill="#fff"/>
<rect x="153" y="478" width="1" height="5" fill="#fff"/>
<rect x="154" y="476" width="1" height="8" fill="#fff"/>
<rect x="155" y="478" width="1" height="5" fill="#fff"/>
<rect x="156" y="480" width="1" height="3" fill="#fff"/>
<rect x="157" y="479" width="1" height="4" fill="#fff"/>
<rect x="158" y="476" width="1" height="8" fill="#fff"/>
<rect x="159" y="483" width="1" height="1" fill="#fff"/>
<rect x="160" y="478" width="1" height="5" fill="#fff"/>
<rect x="161" y="476" width="1" height="8" fill="#fff"/>
<rect x="162" y="479" width="1" height="4" fill="#fff"/>
<rect x="163" y="479" width="1" height="4" fill="#fff"/>
<rect x="164" y="476" width="1" height="8" fill="#fff"/>
<rect x="165" y="480" width="1" height="3" fill="#fff"/>
<rect x="166" y="479" width="1" height="4" fill="#fff"/>
<rect x="167" y="478" width="1" height="5" fill="#fff"/>
<rect x="168" y="476" width="1" height="8" fill="#fff"/>
<rect x="169" y="478" width="1" height="5" fill="#fff"/>
<rect x="170" y="478" width="1" height="5" fill="#fff"/>
<rect x="171" y="476" width="1" height="8" fill="#fff"/>
<rect x="172" y="479" width="1" height="4" fill="#fff"/>
<rect x="173" y="480" width="1" height="3" fill="#fff"/>
<rect x="174" y="480" width="1" height="3" fill="#fff"/>
<rect x="175" y="476" width="1" height="8" fill="#fff"/>
<rect x="176" y="479" width="1" height="4" fill="#fff"/>
<rect x="177" y="479" width="1" height="4" fill="#fff"/>
<rect x="178" y="476" width="1" height="8" fill="#fff"/>
<rect x="179" y="483" width="1" height="1" fill="#fff"/>
<rect x="180" y="478" width="1" height="5" fill="#fff"/>
<rect x="181" y="476" width="1" height="8" fill="#fff"/>
<rect x="182" y="479" width="1" height="4" fill="#fff"/>
<rect x="183" y="479" width="1" height="4" fill="#fff"/>
<rect x="184" y="478" width="1" height="5" fill="#fff"/>
<rect x="185" y="476" width="1" height="8" fill="#fff"/>
<rect x="186" y="479" width="1" height="4" fill="#fff"/>
<rect x="187" y="479" width="1" height="4" fill="#fff"/>
<rect x="188" y="476" width="1" height="8" fill="#fff"/>
<rect x="189" y="482" width="1" height="1" fill="#fff"/>
<rect x="190" y="481" width="1" height="2" fill="#fff"/>
<rect x="191" y="480" width="1" height="3" fill="#fff"/>
<rect x="192" y="482" width="1" height="1" fill="#fff"/>
<rect x="193" y="482" width="1" height="1" fill="#fff"/>
<rect x="194" y="481" width="1" height="2" fill="#fff"/>
<rect x="195" y="480" width="1" height="3" fill="#fff"/>
<rect x="196" y="482" width="1" height="1" fill="#fff"/>
<rect x="197" y="481" width="1" height="2" fill="#fff"/>
<rect x="198" y="480" width="1" height="3" fill="#fff"/>
<rect x="199" y="482" width="1" height="2" fill="#fff"/>
<rect x="200" y="479" width="1" height="4" fill="#fff"/>
<rect x="201" y="480" width="1" height="3" fill="#fff"/>
<rect x="202" y="482" width="1" height="1" fill="#fff"/>
<rect x="203" y="482" width="1" height="1" fill="#fff"/>
<rect x="204" y="481" width="1" height="2" fill="#fff"/>
<rect x="205" y="480" width="1" height="4" fill="#fff"/>
<rect x="206" y="482" width="1" height="1" fill="#fff"/>
<rect x="207" y="481" width="1" height="2" fill="#fff"/>
<rect x="208" y="480" width="1" height="3" fill="#fff"/>
<rect x="209" y="482" width="1" height="1" fill="#fff"/>
<rect x="210" y="481" width="1" height="2" fill="#fff"/>
<rect x="211" y="480" width="1" height="3" fill="#fff"/>
<rect x="212" y="482" width="1" height="1" fill="#fff"/>
<rect x="213" y="482" width="1" height="1" fill="#fff"/>
<rect x="214" y="481" width="1" height="2" fill="#fff"/>
<rect x="215" y="480" width="1" height="3" fill="#fff"/>
<rect x="216" y="482" width="1" height="1" fill="#fff"/>
<rect x="217" y="481" width="1" height="2" fill="#fff"/>
<rect x="218" y="480" width="1" height="3" fill="#fff"/>
<rect x="219" y="482" width="1" height="2" fill="#fff"/>
<rect x="220" y="481" width="1" height="2" fill="#fff"/>
<rect x="221" y="480" width="1" height="3" fill="#fff"/>
<rect x="222" y="479" width="1" height="4" fill="#fff"/>
<rect x="223" y="482" width="1" height="1" fill="#fff"/>
<rect x="224" y="481" width="1" height="2" fill="#fff"/>
<rect x="225" y="480" width="1" height="3" fill="#fff"/>
<rect x="226" y="482" width="1" height="1" fill="#fff"/>
<rect x="227" y="481" width="1" height="2" fill="#fff"/>
<rect x="228" y="480" width="1" height="3" fill="#fff"/>
<rect x="229" y="482" width="1" height="1" fill="#fff"/>
<rect x="230" y="481" width="1" height="2" fill="#fff"/>
<rect x="231" y="480" width="1" height="3" fill="#fff"/>
<rect x="232" y="482" width="1" height="1" fill="#fff"/>
<rect x="233" y="482" width="1" height="1" fill="#fff"/>
<rect x="234" y="481" width="1" height="2" fill="#fff"/>
<rect x="235" y="480" width="1" height="3" fill="#fff"/>
<rect x="236" y="482" width="1" height="1" fill="#fff"/>
<rect x="237" y="481" width="1" height="2" fill="#fff"/>
<rect x="238" y="480" width="1" height="3" fill="#fff"/>
<rect x="239" y="482" width="1" height="2" fill="#fff"/>
<rect x="240" y="481" width="1" height="2" fill="#fff"/>
<rect x="241" y="480" width="1" height="3" fill="#fff"/>
<rect x="242" y="482" width="1" height="1" fill="#fff"/>
<rect x="243" y="482" width="1" height="1" fill="#fff"/>
<rect x="244" y="481" width="1" height="2" fill="#fff"/>
<rect x="245" y="480" width="1" height="3" fill="#fff"/>
<rect x="246" y="482" width="1" height="1" fill="#fff"/>
<rect x="247" y="481" width="1" height="2" fill="#fff"/>
<rect x="248" y="480" width="1" height="3" fill="#fff"/>
<rect x="249" y="482" width="1" height="1" fill="#fff"/>
<rect x="250" y="482" width="1" height="1" fill="#fff"/>
<rect x="251" y="481" width="1" height="2" fill="#fff"/>
<rect x="252" y="480" width="1" height="3" fill="#fff"/>
<rect x="253" y="482" width="1" height="1" fill="#fff"/>
<rect x="254" y="481" width="1" height="2" fill="#fff"/>
<rect x="255" y="480" width="1" height="3" fill="#fff"/>
<rect x="256" y="482" width="1" height="1" fill="#fff"/>
<rect x="257" y="481" width="1" height="2" fill="#fff"/>
<rect x="258" y="480" width="1" height="3" fill="#fff"/>
<rect x="259" y="482" width="1" height="2" fill="#fff"/>
<rect x="260" y="482" width="1" height="1" fill="#fff"/>
<rect x="261" y="481" width="1" height="2" fill="#fff"/>
<rect x="262" y="480" width="1" height="3" fill="#fff"/>
<rect x="263" y="482" width="1" height="1" fill="#fff"/>
<rect x="264" y="481" width="1" height="2" fill="#fff"/>
<rect x="265" y="480" width="1" height="3" fill="#fff"/>
<rect x="266" y="482" width="1" height="1" fill="#fff"/>
<rect x="267" y="481" width="1" height="2" fill="#fff"/>
<rect x="268" y="480" width="1" height="3" fill="#fff"/>
<rect x="269" y="482" width="1" height="1" fill="#fff"/>
<rect x="270" y="482" width="1" height="1" fill="#fff"/>
<rect x="271" y="481" width="1" height="2" fill="#fff"/>
<rect x="272" y="480" width="1" height="3" fill="#fff"/>
<rect x="273" y="482" width="1" height="1" fill="#fff"/>
<rect x="274" y="481" width="1" height="2" fill="#fff"/>
<rect x="275" y="480" width="1" height="3" fill="#fff"/>
<rect x="276" y="482" width="1" height="1" fill="#fff"/>
<rect x="277" y="481" width="1" height="2" fill="#fff"/>
<rect x="278" y="480" width="1" height="3" fill="#fff"/>
<rect x="279" y="482" width="1" height="2" fill="#fff"/>
<rect x="280" y="482" width="1" height="1" fill="#fff"/>
<rect x="281" y="481" width="1" height="2" fill="#fff"/>
<rect x="282" y="480" width="1" height="3" fill="#fff"/>
<rect x="283" y="482" width="1" height="1" fill="#fff"/>
<rect x="284" y="481" width="1" height="2" fill="#fff"/>
<rect x="285" y="480" width="1" height="3" fill="#fff"/>
<rect x="286" y="482" width="1" height="1" fill="#fff"/>
<rect x="287" y="481" width="1" height="2" fill="#fff"/>
<rect x="288" y="480" width="1" height="3" fill="#fff"/>
<rect x="289" y="482" width="1" height="1" fill="#fff"/>
<rect x="290" y="482" width="1" height="1" fill="#fff"/>
<rect x="291" y="481" width="1" height="2" fill="#fff"/>
<rect x="292" y="480" width="1" height="3" fill="#fff"/>
<rect x="293" y="482" width="1" height="1" fill="#fff"/>
<rect x="294" y="481" width="1" height="2" fill="#fff"/>
<rect x="295" y="480" width="1" height="3" fill="#fff"/>
<rect x="296" y="482" width="1" height="1" fill="#fff"/>
<rect x="297" y="481" width="1" height="2" fill="#fff"/>
<rect x="298" y="480" width="1" height="3" fill="#fff"/>
<rect x="299" y="482" width="1" height="2" fill="#fff"/>
<rect x="300" y="482" width="1" height="1" fill="#fff"/>
<rect x="301" y="481" width="1" height="2" fill="#fff"/>
<rect x="302" y="480" width="1" height="3" fill="#fff"/>
<rect x="303" y="482" width="1" height="1" fill="#fff"/>
<rect x="304" y="481" width="1" height="2" fill="#fff"/>
<rect x="305" y="480" width="1" height="3" fill="#fff"/>
<rect x="306" y="482" width="1" height="1" fill="#fff"/>
<rect x="307" y="481" width="1" height="2" fill="#fff"/>
<rect x="308" y="480" width="1" height="3" fill="#fff"/>
<rect x="309" y="482" width="1" height="1" fill="#fff"/>
<rect x="310" y="482" width="1" height="1" fill="#fff"/>
<rect x="311" y="481" width="1" height="2" fill="#fff"/>
<rect x="312" y="480" width="1" height="3" fill="#fff"/>
<rect x="313" y="482" width="1" height="1" fill="#fff"/>
<rect x="314" y="481" width="1" height="2" fill="#fff"/>
<rect x="315" y="480" width="1" height="3" fill="#fff"/>
<rect x="316" y="482" width="1" height="1" fill="#fff"/>
<rect x="317" y="481" width="1" height="2" fill="#fff"/>
<rect x="318" y="480" width="1" height="3" fill="#fff"/>
<rect x="319" y="482" width="1" height="2" fill="#fff"/>
<rect x="320" y="482" width="1" height="1" fill="#fff"/>
<rect x="321" y="481" width="1" height="2" fill="#fff"/>
<rect x="322" y="480" width="1" height="3" fill="#fff"/>
<rect x="323" y="482" width="1" height="1" fill="#fff"/>
<rect x="324" y="481" width="1" height="2" fill="#fff"/>
<rect x="325" y="480" width="1" height="3" fill="#fff"/>
<rect x="326" y="482" width="1" height="1" fill="#fff"/>
<rect x="327" y="482" width="1" height="1" fill="#fff"/>
<rect x="328" y="481" width="1" height="2" fill="#fff"/>
<rect x="329" y="480" width="1" height="3" fill="#fff"/>
<rect x="330" y="482" width="1" height="1" fill="#fff"/>
<rect x="331" y="481" width="1" height="2" fill="#fff"/>
<rect x="332" y="480" width="1" height="3" fill="#fff"/>
<rect x="333" y="482" width="1" height="1" fill="#fff"/>
<rect x="334" y="481" width="1" height="2" fill="#fff"/>
<rect x="335" y="480" width="1" height="3" fill="#fff"/>
<rect x="336" y="482" width="1" height="1" fill="#fff"/>
<rect x="337" y="482" width="1" height="1" fill="#fff"/>
<rect x="338" y="481" width="1" height="2" fill="#fff"/>
<rect x="339" y="480" width="1" height="4" fill="#fff"/>
<rect x="340" y="482" width="1" height="1" fill="#fff"/>
<rect x="341" y="481" width="1" height="2" fill="#fff"/>
<rect x="342" y="480" width="1" height="3" fill="#fff"/>
<rect x="343" y="482" width="1" height="1" fill="#fff"/>
<rect x="344" y="481" width="1" height="2" fill="#fff"/>
<rect x="345" y="480" width="1" height="3" fill="#fff"/>
<rect x="346" y="482" width="1" height="1" fill="#fff"/>
<rect x="347" y="482" width="1" height="1" fill="#fff"/>
<rect x="348" y="481" width="1" height="2" fill="#fff"/>
<rect x="349" y="480" width="1" height="3" fill="#fff"/>
<rect x="350" y="482" width="1" height="1" fill="#fff"/>
<rect x="351" y="481" width="1" height="2" fill="#fff"/>
<rect x="352" y="480" width="1" height="3" fill="#fff"/>
<rect x="353" y="482" width="1" height="1" fill="#fff"/>
<rect x="354" y="481" width="1" height="2" fill="#fff"/>
<rect x="355" y="480" width="1" height="3" fill="#fff"/>
<rect x="356" y="482" width="1" height="1" fill="#fff"/>
<rect x="357" y="482" width="1" height="1" fill="#fff"/>
<rect x="358" y="481" width="1" height="2" fill="#fff"/>
<rect x="359" y="480" width="1" height="3" fill="#fff"/>
<rect x="360" y="482" width="1" height="2" fill="#fff"/>
<rect x="361" y="481" width="1" height="2" fill="#fff"/>
<rect x="362" y="480" width="1" height="3" fill="#fff"/>
<rect x="363" y="482" width="1" height="1" fill="#fff"/>
<rect x="364" y="481" width="1" height="2" fill="#fff"/>
<rect x="365" y="480" width="1" height="3" fill="#fff"/>
<rect x="366" y="482" width="1" height="1" fill="#fff"/>
<rect x="367" y="482" width="1" height="1" fill="#fff"/>
<rect x="368" y="481" width="1" height="2" fill="#fff"/>
<rect x="369" y="480" width="1" height="3" fill="#fff"/>
<rect x="370" y="482" width="1" height="1" fill="#fff"/>
<rect x="371" y="481" width="1" height="2" fill="#fff"/>
<rect x="372" y="480" width="1" height="3" fill="#fff"/>
<rect x="373" y="482" width="1" height="1" fill="#fff"/>
<rect x="374" y="481" width="1" height="2" fill="#fff"/>
<rect x="375" y="480" width="1" height="3" fill="#fff"/>
<rect x="376" y="482" width="1" height="1" fill="#fff"/>
<rect x="377" y="482" width="1" height="1" fill="#fff"/>
<rect x="378" y="481" width="1" height="2" fill="#fff"/>
<rect x="379" y="480" width="1" height="3" fill="#fff"/>
<rect x="380" y="482" width="1" height="2" fill="#fff"/>
<rect x="381" y="481" width="1" height="2" fill="#fff"/>
<rect x="382" y="480" width="1" height="3" fill="#fff"/>
<rect x="383" y="482" width="1" height="1" fill="#fff"/>
<rect x="384" y="481" width="1" height="2" fill="#fff"/>
<rect x="385" y="480" width="1" height="3" fill="#fff"/>
<rect x="386" y="482" width="1" height="1" fill="#fff"/>
<rect x="387" y="482" width="1" height="1" fill="#fff"/>
<rect x="388" y="481" width="1" height="2" fill="#fff"/>
<rect x="389" y="479" width="1" height="4" fill="#fff"/>
<rect x="390" y="482" width="1" height="1" fill="#fff"/>
<rect x="391" y="481" width="1" height="2" fill="#fff"/>
<rect x="392" y="480" width="1" height="3" fill="#fff"/>
<rect x="393" y="482" width="1" height="1" fill="#fff"/>
<rect x="394" y="481" width="1" height="2" fill="#fff"/>
<rect x="395" y="480" width="1" height="3" fill="#fff"/>
<rect x="396" y="482" width="1" height="1" fill="#fff"/>
<rect x="397" y="482" width="1" height="1" fill="#fff"/>
<rect x="398" y="481" width="1" height="2" fill="#fff"/>
<rect x="399" y="480" width="1" height="3" fill="#fff"/>
<rect x="400" y="482" width="1" height="2" fill="#fff"/>
<rect x="401" y="481" width="1" height="2" fill="#fff"/>
<rect x="402" y="480" width="1" height="3" fill="#fff"/>
<rect x="403" y="482" width="1" height="1" fill="#fff"/>
<rect x="404" y="482" width="1" height="1" fill="#fff"/>
<rect x="405" y="481" width="1" height="2" fill="#fff"/>
<rect x="406" y="480" width="1" height="3" fill="#fff"/>
<rect x="407" y="482" width="1" height="1" fill="#fff"/>
<rect x="408" y="481" width="1" height="2" fill="#fff"/>
<rect x="409" y="480" width="1" height="3" fill="#fff"/>
<rect x="410" y="482" width="1" height="1" fill="#fff"/>
<rect x="411" y="481" width="1" height="2" fill="#fff"/>
<rect x="412" y="480" width="1" height="3" fill="#fff"/>
<rect x="413" y="482" width="1" height="1" fill="#fff"/>
<rect x="414" y="482" width="1" height="1" fill="#fff"/>
<rect x="415" y="481" width="1" height="2" fill="#fff"/>
<rect x="416" y="480" width="1" height="3" fill="#fff"/>
<rect x="417" y="482" width="1" height="1" fill="#fff"/>
<rect x="418" y="481" width="1" height="2" fill="#fff"/>
<rect x="419" y="480" width="1" height="3" fill="#fff"/>
<rect x="420" y="482" width="1" height="2" fill="#fff"/>
<rect x="421" y="481" width="1" height="2" fill="#fff"/>
<rect x="422" y="480" width="1" height="3" fill="#fff"/>
<rect x="423" y="482" width="1" height="1" fill="#fff"/>
<rect x="424" y="482" width="1" height="1" fill="#fff"/>
<rect x="425" y="481" width="1" height="2" fill="#fff"/>
<rect x="426" y="480" width="1" height="3" fill="#fff"/>
<rect x="427" y="482" width="1" height="1" fill="#fff"/>
<rect x="428" y="481" width="1" height="2" fill="#fff"/>
<rect x="429" y="480" width="1" height="3" fill="#fff"/>
<rect x="430" y="482" width="1" height="1" fill="#fff"/>
<rect x="431" y="481" width="1" height="2" fill="#fff"/>
<rect x="432" y="480" width="1" height="3" fill="#fff"/>
<rect x="433" y="482" width="1" height="1" fill="#fff"/>
<rect x="434" y="482" width="1" height="1" fill="#fff"/>
<rect x="435" y="481" width="1" height="2" fill="#fff"/>
<rect x="436" y="480" width="1" height="3" fill="#fff"/>
<rect x="437" y="482" width="1" height="1" fill="#fff"/>
<rect x="438" y="481" width="1" height="2" fill="#fff"/>
<rect x="439" y="480" width="1" height="3" fill="#fff"/>
<rect x="440" y="482" width="1" height="2" fill="#fff"/>
<rect x="441" y="481" width="1" height="2" fill="#fff"/>
<rect x="442" y="480" width="1" height="3" fill="#fff"/>
<rect x="443" y="482" width="1" height="1" fill="#fff"/>
<rect x="444" y="482" width="1" height="1" fill="#fff"/>
<rect x="445" y="481" width="1" height="2" fill="#fff"/>
<rect x="446" y="480" width="1" height="3" fill="#fff"/>
<rect x="447" y="482" width="1" height="1" fill="#fff"/>
<rect x="448" y="481" width="1" height="2" fill="#fff"/>
<rect x="449" y="480" width="1" height="3" fill="#fff"/>
<rect x="450" y="482" width="1" height="1" fill="#fff"/>
<rect x="451" y="481" width="1" height="2" fill="#fff"/>
<rect x="452" y="480" width="1" height="3" fill="#fff"/>
<rect x="453" y="482" width="1" height="1" fill="#fff"/>
<rect x="454" y="482" width="1" height="1" fill="#fff"/>
<rect x="455" y="481" width="1" height="2" fill="#fff"/>
<rect x="456" y="480" width="1" height="3" fill="#fff"/>
<rect x="457" y="482" width="1" height="1" fill="#fff"/>
</g>
<g filter="url(#g)">
<text x="206" y="14" font-size="11" fill="#fff" stroke="#fff" text-anchor="start" textLength="32" lengthAdjust="spacingAndGlyphs">02:00</text>
<text x="206" y="501.7" font-size="11" fill="#fff" stroke="#fff" text-anchor="start" textLength="32" lengthAdjust="spacingAndGlyphs">02:00</text>
<text x="373.5" y="14" font-size="11" fill="#fff" stroke="#fff" text-anchor="start" textLength="32" lengthAdjust="spacingAndGlyphs">04:00</text>
<text x="373.5" y="501.7" font-size="11" fill="#fff" stroke="#fff" text-anchor="start" textLength="32" lengthAdjust="spacingAndGlyphs">04:00</text>
<text x="541" y="14" font-size="11" fill="#fff" stroke="#fff" text-anchor="start" textLength="32" lengthAdjust="spacingAndGlyphs">06:00</text>
<text x="541" y="501.7" font-size="11" fill="#fff" stroke="#fff" text-anchor="start" textLength="32" lengthAdjust="spacingAndGlyphs">06:00</text>
<text x="101" y="39.0" font-size="12.5" fill="#fff" stroke="#fff" text-anchor="start" textLength="6" lengthAdjust="spacingAndGlyphs">5</text>
<text x="101" y="48.25" font-size="12.5" fill="#fff" stroke="#fff" text-anchor="start" textLength="6" lengthAdjust="spacingAndGlyphs">4</text>
<text x="101" y="57.5" font-size="12.5" fill="#fff" stroke="#fff" text-anchor="start" textLength="6" lengthAdjust="spacingAndGlyphs">3</text>
<text x="101" y="66.75" font-size="12.5" fill="#fff" stroke="#fff" text-anchor="start" textLength="6" lengthAdjust="spacingAndGlyphs">2</text>
<text x="101" y="76.0" font-size="12.5" fill="#fff" stroke="#fff" text-anchor="start" textLength="6" lengthAdjust="spacingAndGlyphs">1</text>
<text y="62" font-size="12.5" fill="#fff" stroke="#fff" xml:space="preserve"><tspan x="18.2" textLength="17.5" lengthAdjust="spacingAndGlyphs">TM </tspan><tspan x="39.3" textLength="56.2" lengthAdjust="spacingAndGlyphs">SUBMODE</tspan></text>
<text y="109" font-size="12.5" fill="#fff" stroke="#fff" xml:space="preserve"><tspan x="7.5" textLength="65.5" lengthAdjust="spacingAndGlyphs">LASCO/EIT </tspan><tspan x="76" textLength="25.5" lengthAdjust="spacingAndGlyphs">(OP)</tspan></text>
<text x="49" y="149.0" font-size="12.5" fill="#fff" stroke="#fff" text-anchor="start" textLength="52.5" lengthAdjust="spacingAndGlyphs">OS_3092</text>
<text x="49" y="172.36" font-size="12.5" fill="#fff" stroke="#fff" text-anchor="start" textLength="52.5" lengthAdjust="spacingAndGlyphs">OS_3342</text>
<text x="49" y="195.72" font-size="12.5" fill="#fff" stroke="#fff" text-anchor="start" textLength="52.5" lengthAdjust="spacingAndGlyphs">OS_3361</text>
<text x="49" y="219.07999999999998" font-size="12.5" fill="#fff" stroke="#fff" text-anchor="start" textLength="52.5" lengthAdjust="spacingAndGlyphs">OS_3387</text>
<text x="49" y="242.44" font-size="12.5" fill="#fff" stroke="#fff" text-anchor="start" textLength="52.5" lengthAdjust="spacingAndGlyphs">OS_3389</text>
<text x="49" y="265.8" font-size="12.5" fill="#fff" stroke="#fff" text-anchor="start" textLength="52.5" lengthAdjust="spacingAndGlyphs">OS_3390</text>
<text x="49" y="289.15999999999997" font-size="12.5" fill="#fff" stroke="#fff" text-anchor="start" textLength="52.5" lengthAdjust="spacingAndGlyphs">OS_3405</text>
<text x="49" y="312.52" font-size="12.5" fill="#fff" stroke="#fff" text-anchor="start" textLength="52.5" lengthAdjust="spacingAndGlyphs">OS_3406</text>
<text x="49" y="335.88" font-size="12.5" fill="#fff" stroke="#fff" text-anchor="start" textLength="52.5" lengthAdjust="spacingAndGlyphs">OS_3422</text>
<text x="49" y="359.24" font-size="12.5" fill="#fff" stroke="#fff" text-anchor="start" textLength="52.5" lengthAdjust="spacingAndGlyphs">OS_3532</text>
<text x="49" y="382.6" font-size="12.5" fill="#fff" stroke="#fff" text-anchor="start" textLength="52.5" lengthAdjust="spacingAndGlyphs">OS_3568</text>
<text x="49" y="405.96" font-size="12.5" fill="#fff" stroke="#fff" text-anchor="start" textLength="52.5" lengthAdjust="spacingAndGlyphs">OS_3570</text>
<text x="87.3" y="432" font-size="12.5" fill="#fff" stroke="#fff" text-anchor="start" textLength="20" lengthAdjust="spacingAndGlyphs">100</text>
<text x="92.6" y="444" font-size="12.5" fill="#fff" stroke="#fff" text-anchor="start" textLength="14.5" lengthAdjust="spacingAndGlyphs">80</text>
<text x="92.6" y="477" font-size="12.5" fill="#fff" stroke="#fff" text-anchor="start" textLength="14.5" lengthAdjust="spacingAndGlyphs">20</text>
<text x="101" y="488.5" font-size="12.5" fill="#fff" stroke="#fff" text-anchor="start" textLength="6" lengthAdjust="spacingAndGlyphs">0</text>
<text x="7.7" y="453" font-size="12.5" fill="#fff" stroke="#fff" text-anchor="start" textLength="82.5" lengthAdjust="spacingAndGlyphs">LASCO-buffer</text>
<text x="13.7" y="520" font-size="10" fill="#ff0000" stroke="#ff0000" text-anchor="start" textLength="11.2" lengthAdjust="spacingAndGlyphs">C1</text>
<text x="34.8" y="520" font-size="10" fill="#00ff00" stroke="#00ff00" text-anchor="start" textLength="12.4" lengthAdjust="spacingAndGlyphs">C2</text>
<text x="55.7" y="520" font-size="10" fill="#98f0ff" stroke="#98f0ff" text-anchor="start" textLength="12.6" lengthAdjust="spacingAndGlyphs">C3</text>
<text x="76.8" y="520" font-size="10" fill="#ffff00" stroke="#ffff00" text-anchor="start" textLength="12.9" lengthAdjust="spacingAndGlyphs">EIT</text>
<text y="518" font-size="12.5" fill="#fff" stroke="#fff" xml:space="preserve"><tspan x="308.4" textLength="78.8" lengthAdjust="spacingAndGlyphs">2004/04/12 </tspan><tspan x="392.3" textLength="77.9" lengthAdjust="spacingAndGlyphs">15:54:00.000</tspan></text>
</g>
</svg>
</body></html>
